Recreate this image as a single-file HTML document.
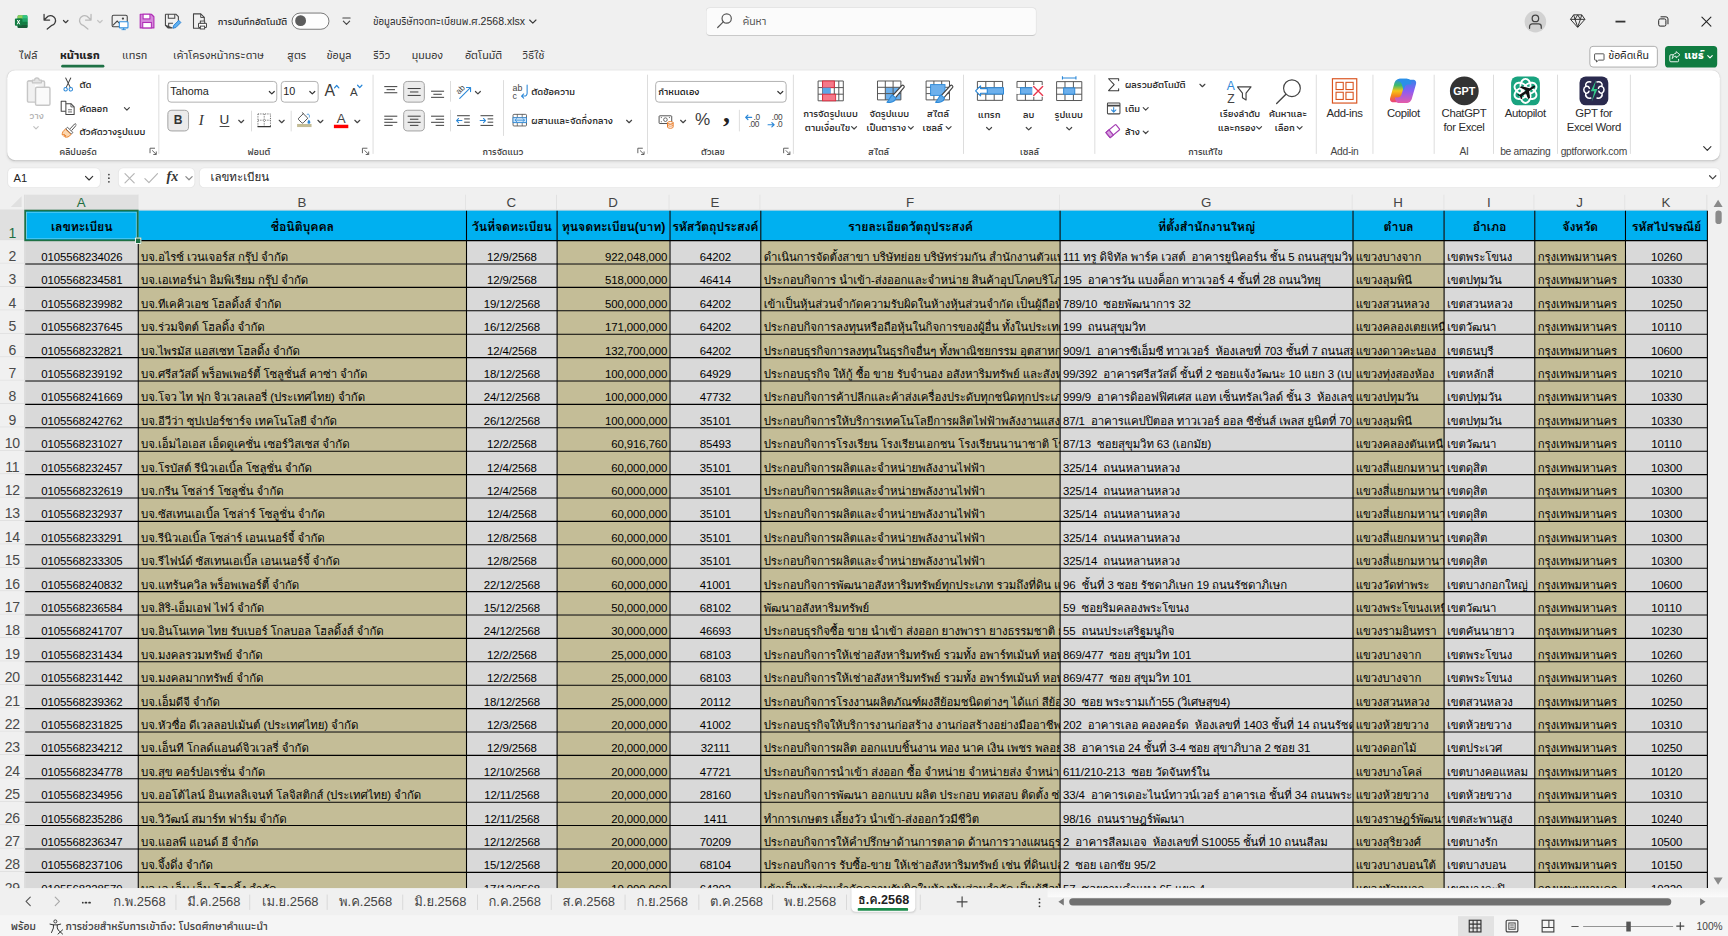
<!DOCTYPE html>
<html lang="th"><head><meta charset="utf-8"><title>Excel</title>
<style>
*{box-sizing:border-box;margin:0;padding:0}
html,body{width:1728px;height:936px;overflow:hidden;background:#f0f0f0}
body{font-family:"Liberation Sans","Loma","Noto Sans Thai Looped","Noto Sans Thai",sans-serif;color:#242424}
#clip{position:absolute;left:0;top:0;width:1728px;height:936px;overflow:hidden}
#app{position:absolute;left:0;top:0;width:1920px;height:1040px;transform:scale(0.9);transform-origin:0 0;background:#f0f0f0;overflow:hidden;font-size:13px}
#app div,#app span,#app i,#app b,#app svg{position:absolute}
#grid{overflow:hidden;background:#f0f0f0}
#grid .corner{background:#f0f0f0;border-right:1px solid #d4d4d4;border-bottom:1px solid #d4d4d4}
#grid .corner i{right:3px;bottom:3px;width:0;height:0;border-left:12px solid transparent;border-bottom:12px solid #e0e0e0}
#grid .ch{background:#f0f0f0;border-right:1px solid #dedede;border-bottom:1px solid #d4d4d4;text-align:center;font-size:14.8px;line-height:18.4px;color:#444;padding-top:0;overflow:hidden}
#grid .ch.sel{background:#e0e0e0;color:#1e6e42}
#grid .rh{background:#f0f0f0;border-right:1px solid #d4d4d4;border-bottom:1px solid #dedede;color:#4a4a4a;font-size:15.6px}
#grid .rh span{left:0.5px;right:0;bottom:-2.9px;text-align:center;line-height:20px;letter-spacing:-.3px}
#grid .rh.sel{background:#e0e0e0;color:#1e6e42}
#grid .c{overflow:hidden;white-space:nowrap;font-size:12.7px;color:#000;letter-spacing:-.12px}
#grid .c span{left:3.2px;right:3px;bottom:-1.8px;line-height:18px;white-space:pre;overflow:visible}
#grid .c.g{background:#d9d9d9}
#grid .c.k{background:#c4bd97}
#grid .c.c span{text-align:center}
#grid .c.r span{text-align:right}
#grid .c.l span{text-align:left}
#grid .c.hd{background:#00b0f0;font-weight:bold;font-size:13.7px}
#grid .c.hd span{text-align:center;top:1.5px;bottom:-1.5px;left:-20px;right:-20px;line-height:33.11px}
#grid .selbox{border:2px solid #1e7145;box-shadow:inset 0 0 0 1px rgba(255,255,255,.5)}
#grid .selh{width:7px;height:7px;background:#1e7145;border:1px solid #fff}
#grid .vsb{background:#f0f0f0}
#grid .vsb .thumb{left:7px;top:17.5px;width:7.5px;height:15.5px;border-radius:4px;background:#8a8a8a}
#grid .vsb .up{left:5px;top:6px;width:0;height:0;border-left:5.5px solid transparent;border-right:5.5px solid transparent;border-bottom:8px solid #8a8a8a}
#grid .vsb .dn{left:5px;bottom:4px;width:0;height:0;border-left:5.5px solid transparent;border-right:5.5px solid transparent;border-top:8px solid #8a8a8a}

#title,#tabs,#rib,#fbar,#status{font-family:"Liberation Sans","Athiti","Noto Sans Thai","Loma",sans-serif;font-weight:500}

#title{left:0;top:0;width:1920px;height:48px}
.t{white-space:nowrap;line-height:20px;height:20px}
.chev{width:8px;height:8px}
#tabs .t{font-size:13px;color:#333}
#tabs .t.act{font-weight:bold;color:#222}
#tabs .ul{height:3px;background:#1e7145;border-radius:2px}
.btn{border:1px solid #a6a6a6;border-radius:4px;background:#fff}
#rib .panel{background:#fff;border-radius:9px;box-shadow:0 1px 3px rgba(0,0,0,.10),0 0 1px rgba(0,0,0,.12)}
#rib .t{font-size:11.2px;color:#2b2b2b;font-weight:600}
#rib .t.c{text-align:center;transform:translateX(-50%)}
#rib .lbl{font-size:10.6px;color:#444}
#rib .sep{width:1px;background:#dadada}
#rib .box{border:1px solid #a9a9a9;border-radius:4px;background:#fff}
#rib .selb{border:1px solid #9a9a9a;border-radius:5px;background:#ebebeb}
#fbar .box{background:#fff;border-radius:5px;box-shadow:0 0 0 1px #e6e6e6}
#sheets{background:#f0f0f0}
#sheets .t{font-size:14.4px;color:#444;line-height:24px;height:24px}
#sheets .sp{width:1px;background:#d6d6d6}
#sheets .act{background:#fff;border-radius:0 0 5px 5px;box-shadow:0 1px 2px rgba(0,0,0,.12)}
#status{background:#f5f5f5}
#status .t{font-size:12.4px;color:#444;font-weight:600}
</style></head>
<body>
<div id="clip"><div id="app">
<div id="title">
<svg style="left:15.56px;top:15.56px;width:16.11111111111111px;height:16.11111111111111px" viewBox="0 0 32 32"><path d="M10 2h16a3 3 0 0 1 3 3v22a3 3 0 0 1-3 3H10a3 3 0 0 1-3-3V5a3 3 0 0 1 3-3z" fill="#21a366"/><path d="M7 9h11v7H7z" fill="#107c41"/><path d="M18 2h8a3 3 0 0 1 3 3v4H18z" fill="#33c481"/><path d="M18 9h11v7H18z" fill="#21a366"/><path d="M7 16h11v7H7z" fill="#185c37"/><path d="M18 16h11v7H18z" fill="#107c41"/><path d="M7 23h22v4a3 3 0 0 1-3 3H10a3 3 0 0 1-3-3z" fill="#185c37"/><path d="M7 2h11v7H7z" fill="#9bd86f" opacity=".0"/><path d="M10 2h8v7H7V5a3 3 0 0 1 3-3z" fill="#8fd05a"/><rect x="1" y="9" width="16" height="16" rx="2.2" fill="#107c41"/><path d="M5.2 12.3h2.5l1.4 3 1.5-3h2.3l-2.6 4.6 2.7 4.8h-2.5l-1.5-3.2-1.6 3.2H5l2.7-4.8z" fill="#fff"/></svg>
<svg style="left:45.0px;top:13.33px;width:21.12px;height:21.12px" viewBox="-12 -12 24 24" fill="none" ><path d="M-7.5 -8.5 V-1.5 H-0.5 M-7.2 -1.8 L-2.5 -6.3 A6.3 6.3 0 1 1 2.4 5.2 L-3.5 10" stroke="#3b3b3b" stroke-width="1.6" stroke-linecap="round" stroke-linejoin="round"/></svg>
<svg style="left:64.56px;top:16.44px;width:16px;height:16px" viewBox="-8 -8 16 16" fill="none" ><path d="M-2.5 -1.25 L0 1.25 L2.5 -1.25" stroke="#3b3b3b" stroke-width="1.3" stroke-linecap="round" stroke-linejoin="round"/></svg>
<svg style="left:84.44px;top:13.33px;width:21.12px;height:21.12px" viewBox="-12 -12 24 24" fill="none" ><path d="M7.5 -8.5 V-1.5 H0.5 M7.2 -1.8 L2.5 -6.3 A6.3 6.3 0 1 0 -2.4 5.2 L3.5 10" stroke="#b9b9b9" stroke-width="1.6" stroke-linecap="round" stroke-linejoin="round"/></svg>
<svg style="left:103.44px;top:16.44px;width:16px;height:16px" viewBox="-8 -8 16 16" fill="none" ><path d="M-2.5 -1.25 L0 1.25 L2.5 -1.25" stroke="#c4c4c4" stroke-width="1.3" stroke-linecap="round" stroke-linejoin="round"/></svg>
<svg style="left:122.93px;top:13.49px;width:20.8px;height:20.8px" viewBox="-13 -13 26 26" fill="none" ><rect x="-11" y="-8" width="21" height="16" rx="2" stroke="#444" stroke-width="1.5"/><path d="M-10 6 L-4 0 L0 4" stroke="#444" stroke-width="1.4"/><circle cx="4" cy="-3.5" r="1.6" fill="#444"/><rect x="-1" y="1" width="12" height="8.5" rx="1" fill="#fff" stroke="#2e8fe0" stroke-width="1.5"/><path d="M2 12 H8 M5 9.5 V12" stroke="#2e8fe0" stroke-width="1.5"/></svg>
<svg style="left:152.6px;top:13.49px;width:20.8px;height:20.8px" viewBox="-13 -13 26 26" fill="none" ><path d="M-9.5 -9.5 H6 L9.5 -6 V9.5 H-9.5 Z" fill="#d58adb" stroke="#b02fb6" stroke-width="1.6" stroke-linejoin="round"/><rect x="-5.5" y="-9.5" width="9.5" height="6.5" fill="#fff" stroke="#b02fb6" stroke-width="1.5"/><rect x="-6" y="2" width="12" height="7.5" fill="#fff" stroke="#b02fb6" stroke-width="1.5"/></svg>
<svg style="left:181.49px;top:13.49px;width:20.8px;height:20.8px" viewBox="-13 -13 26 26" fill="none" ><path d="M-9.5 -9.5 H5 L8.5 -6 V0 M0 9.5 H-6 L-9.5 6 Z M-9.5 6 V-9.5" stroke="#444" stroke-width="1.5" stroke-linejoin="round"/><path d="M-5.5 -9.5 V-4 H3.5 V-9.5" stroke="#444" stroke-width="1.4"/><path d="M-5 9 V3 H1" stroke="#444" stroke-width="1.4"/><path d="M1 10 L2 6 L9 -1 L12 2 L5 9 Z" fill="#5fb0f0" stroke="#1f78d0" stroke-width="1.2" stroke-linejoin="round"/></svg>
<svg style="left:211.27px;top:13.49px;width:20.8px;height:20.8px" viewBox="-13 -13 26 26" fill="none" ><path d="M2 10 H-8 V-10 H2 L7 -5 V0" stroke="#444" stroke-width="1.5" stroke-linejoin="round"/><path d="M2 -10 V-5 H7" stroke="#444" stroke-width="1.3"/><rect x="-1" y="3" width="11" height="6" rx="1" fill="#fff" stroke="#444" stroke-width="1.4"/><rect x="1.5" y="0" width="6" height="3" stroke="#444" stroke-width="1.3" fill="#fff"/><rect x="1.5" y="7" width="6" height="4" stroke="#444" stroke-width="1.3" fill="#fff"/></svg>
<span class="t" style="left:241.89px;top:13.670000000000002px;font-size:10.9px;color:#333;font-weight:600">การบันทึกอัตโนมัติ</span>
<div style="left:324.11px;top:13.78px;width:41.78px;height:18.89px;border:1px solid #6b6b6b;border-radius:9.44px;background:#fdfdfd"></div>
<div style="left:328.33px;top:17.44px;width:11.56px;height:11.56px;border-radius:50%;background:#5c5c5c"></div>
<svg style="left:377.22px;top:16.11px;width:16px;height:16px" viewBox="-8 -8 16 16" fill="none" ><path d="M-4 -4 H4" stroke="#444" stroke-width="1.3" stroke-linecap="round"/><path d="M-3.5 -0.5 L0 3 L3.5 -0.5" stroke="#444" stroke-width="1.3" stroke-linecap="round" stroke-linejoin="round"/></svg>
<span class="t" style="left:414.78px;top:13.670000000000002px;font-size:11.7px;color:#2b2b2b">ข้อมูลบริษัทจดทะเบียนพ.ศ.2568.xlsx</span>
<svg style="left:583.89px;top:16.22px;width:16px;height:16px" viewBox="-8 -8 16 16" fill="none" ><path d="M-3.5 -1.75 L0 1.75 L3.5 -1.75" stroke="#3b3b3b" stroke-width="1.3" stroke-linecap="round" stroke-linejoin="round"/></svg>
<div style="left:784.44px;top:8.11px;width:367.44px;height:31.56px;background:#fbfbfb;border:1px solid #dcdcdc;border-bottom-color:#c9c9c9;border-radius:5px"></div>
<svg style="left:791.0px;top:9.33px;width:28px;height:28px" viewBox="-14 -14 28 28" fill="none" ><circle cx="2.411111111111111" cy="-2.411111111111111" r="5.166666666666667" stroke="#555" stroke-width="1.3"/><path d="M-1.377777777777778 1.377777777777778 L-7.577777777777778 7.577777777777778" stroke="#555" stroke-width="1.3" stroke-linecap="round"/></svg>
<span class="t" style="left:825.22px;top:13.89px;font-size:12.6px;color:#555">ค้นหา</span>
<div style="left:1693.67px;top:11.67px;width:24.44px;height:24.44px;border-radius:50%;background:#d2d2d2"></div>
<svg style="left:1693.89px;top:11.89px;width:24px;height:24px" viewBox="-12 -12 24 24" fill="none" ><circle cx="0" cy="-3.5" r="3.6" stroke="#444" stroke-width="1.4"/><path d="M-6.5 7.5 V5.5 A3 3 0 0 1 -3.5 2.5 H3.5 A3 3 0 0 1 6.5 5.5 V7.5" stroke="#444" stroke-width="1.4" stroke-linecap="round"/></svg>
<svg style="left:1741.0px;top:11.33px;width:24px;height:24px" viewBox="-12 -12 24 24" fill="none" ><path d="M-4.5 -6.5 H4.5 L8 -1.5 L0 7.5 L-8 -1.5 Z M-8 -1.5 H8 M-3 -1.5 L0 7 L3 -1.5 M-4.5 -6.5 L-3 -1.5 L0 -6.5 L3 -1.5 L4.5 -6.5" stroke="#333" stroke-width="1.1" stroke-linejoin="round"/></svg>
<div style="left:1795.0px;top:23.33px;width:10.56px;height:1.2px;background:#333"></div>
<svg style="left:1837.78px;top:14.11px;width:20px;height:20px" viewBox="-10 -10 20 20" fill="none" ><rect x="-5" y="-3" width="8" height="8" rx="1.6" stroke="#222" stroke-width="1.1"/><path d="M-2.5 -5.3 H3 A2.3 2.3 0 0 1 5.3 -3 V2.5" stroke="#222" stroke-width="1.1" stroke-linecap="round"/></svg>
<svg style="left:1885.89px;top:14.11px;width:20px;height:20px" viewBox="-10 -10 20 20" fill="none" ><path d="M-5 -5 L5 5 M5 -5 L-5 5" stroke="#222" stroke-width="1.2" stroke-linecap="round"/></svg>
</div>
<div id="tabs" style="left:0;top:0;width:1920px;height:78px">
<span class="t" style="left:21.11px;top:52.22px;">ไฟล์</span>
<span class="t act" style="left:66.67px;top:52.22px;">หน้าแรก</span>
<span class="t" style="left:135.89px;top:52.22px;">แทรก</span>
<span class="t" style="left:192.56px;top:52.22px;">เค้าโครงหน้ากระดาษ</span>
<span class="t" style="left:319.22px;top:52.22px;">สูตร</span>
<span class="t" style="left:363.0px;top:52.22px;">ข้อมูล</span>
<span class="t" style="left:414.78px;top:52.22px;">รีวิว</span>
<span class="t" style="left:457.44px;top:52.22px;">มุมมอง</span>
<span class="t" style="left:516.67px;top:52.22px;">อัตโนมัติ</span>
<span class="t" style="left:580.33px;top:52.22px;">วิธีใช้</span>
<div class="ul" style="left:67.56px;top:72.33px;width:48.0px"></div>
<div class="btn" style="left:1765.89px;top:51.11px;width:76.0px;height:24.11px"></div>
<svg style="left:1769.89px;top:56.56px;width:14.0px;height:14.0px" viewBox="-10 -10 20 20" fill="none" ><path d="M-6.5 -6 H6.5 A1 1 0 0 1 7.5 -5 V3 A1 1 0 0 1 6.5 4 H-1 L-4.5 7 V4 H-6.5 A1 1 0 0 1 -7.5 3 V-5 A1 1 0 0 1 -6.5 -6 Z" stroke="#333" stroke-width="1.3" stroke-linejoin="round"/></svg>
<span class="t" style="left:1787.22px;top:52.22px;font-size:12.6px;color:#222">ข้อคิดเห็น</span>
<div style="left:1850.33px;top:51.11px;width:57.44px;height:24.11px;background:#107c41;border-radius:4px"></div>
<svg style="left:1852.76px;top:55.31px;width:15.6px;height:15.6px" viewBox="-10 -10 20 20" fill="none" ><path d="M-2 -2.5 H-5.5 A1.5 1.5 0 0 0 -7 -1 V6 A1.5 1.5 0 0 0 -5.5 7.5 H4 A1.5 1.5 0 0 0 5.5 6 V4" stroke="#fff" stroke-width="1.3" stroke-linecap="round"/><path d="M2 -7 L7.5 -2.5 L2 2 V-0.5 C-1 -0.5 -2.5 1 -3.5 3 C-3.5 -1.5 -1 -4.5 2 -4.7 Z" stroke="#fff" stroke-width="1.2" stroke-linejoin="round"/></svg>
<span class="t" style="left:1871.44px;top:52.22px;font-size:12.6px;color:#fff;font-weight:bold">แชร์</span>
<svg style="left:1892.33px;top:55.11px;width:16px;height:16px" viewBox="-8 -8 16 16" fill="none" ><path d="M-2.5 -1.25 L0 1.25 L2.5 -1.25" stroke="#fff" stroke-width="1.3" stroke-linecap="round" stroke-linejoin="round"/></svg>
</div>
<div id="rib" style="left:0;top:0;width:1920px;height:190px">
<div class="panel" style="left:8.44px;top:78.44px;width:1902.89px;height:99.56px"></div>
<svg style="left:24.56px;top:83.67px;width:36px;height:36px" viewBox="-18 -18 36 36" fill="none" ><path d="M-4 -12 H-11 A1.5 1.5 0 0 0 -12.5 -10.5 V10 A1.5 1.5 0 0 0 -11 11.5 H-4" stroke="#c6c6c6" stroke-width="1.6" fill="#f1f1f1"/><path d="M-12.5 -10.5 A1.5 1.5 0 0 1 -11 -12 H5 A1.5 1.5 0 0 1 6.5 -10.5 V-5" stroke="#c6c6c6" stroke-width="1.6" fill="#f1f1f1"/><path d="M-7 -10 V-13 H-4.5 A2.5 2.5 0 0 1 0.5 -13 H3 V-10 Z" fill="#e4e4e4" stroke="#c6c6c6" stroke-width="1.4" stroke-linejoin="round"/><rect x="-3.5" y="-5" width="16" height="20" rx="1.5" fill="#fafafa" stroke="#c6c6c6" stroke-width="1.6"/></svg>
<span class="t" style="left:32.56px;top:117.56px;color:#b5b5b5">วาง</span>
<svg style="left:32.33px;top:134.0px;width:16px;height:16px" viewBox="-8 -8 16 16" fill="none" ><path d="M-2.5 -1.25 L0 1.25 L2.5 -1.25" stroke="#c2c2c2" stroke-width="1.3" stroke-linecap="round" stroke-linejoin="round"/></svg>
<svg style="left:66.76px;top:85.09px;width:17.6px;height:17.6px" viewBox="-11 -11 22 22" fill="none" ><path d="M-3.5 -9 L3 4.5 M3.5 -9 L-3 4.5" stroke="#444" stroke-width="1.4" stroke-linecap="round"/><circle cx="-3.6" cy="6.8" r="2.4" stroke="#2b88d8" stroke-width="1.4"/><circle cx="3.6" cy="6.8" r="2.4" stroke="#2b88d8" stroke-width="1.4"/></svg>
<span class="t" style="left:88.33px;top:84.0px;">ตัด</span>
<svg style="left:65.51px;top:110.4px;width:19.2px;height:19.2px" viewBox="-12 -12 24 24" fill="none" ><path d="M-3 -5.5 V-9 H-9.5 V5 H-3" stroke="#444" stroke-width="1.4" stroke-linejoin="round"/><path d="M-3 -5.5 H4 L8.5 -1 V9.5 H-3 Z" stroke="#444" stroke-width="1.4" fill="#fff" stroke-linejoin="round"/><path d="M4 -5.5 V-1 H8.5 M0 3 H5.5 M0 6 H5.5" stroke="#444" stroke-width="1.1"/></svg>
<span class="t" style="left:88.33px;top:109.78px;">คัดลอก</span>
<svg style="left:133.11px;top:112.56px;width:16px;height:16px" viewBox="-8 -8 16 16" fill="none" ><path d="M-2.75 -1.375 L0 1.375 L2.75 -1.375" stroke="#444" stroke-width="1.3" stroke-linecap="round" stroke-linejoin="round"/></svg>
<svg style="left:66.53px;top:136.2px;width:18.72px;height:18.72px" viewBox="-13 -13 26 26" fill="none" ><path d="M2 -3 L9 -10.5 A1.6 1.6 0 0 1 11.3 -8.3 L4.5 -0.5" stroke="#444" stroke-width="1.4" fill="#fff" stroke-linejoin="round"/><path d="M-2 -5.5 L6.5 2.5 L4 5 L-4.5 -3 Z" fill="#fff" stroke="#444" stroke-width="1.3" stroke-linejoin="round"/><path d="M-5 -2.5 L3.5 5.5 C1 9.5 -3 10.5 -6 9.5 L-4.5 7 L-7.5 8.5 L-6.5 5.5 L-10 6.5 C-10.5 3 -8.5 -0.5 -5 -2.5 Z" fill="#fbd7b0" stroke="#e8761a" stroke-width="1.3" stroke-linejoin="round"/></svg>
<span class="t" style="left:88.33px;top:135.56px;">ตัวคัดวางรูปแบบ</span>
<span class="t lbl" style="left:66.11px;top:157.56px;">คลิปบอร์ด</span>
<svg style="left:164.9px;top:163.23px;width:10.2px;height:10.2px" viewBox="-6 -6 12 12" fill="none" ><path d="M-4 2.5 V-4 H2.5" stroke="#555" stroke-width="1.2"/><path d="M-1.2 -1.2 L4 4 M4.2 0.3 V4.2 H0.3" stroke="#555" stroke-width="1.2"/></svg>
<div class="sep" style="left:176.44px;top:83.33px;height:87.78px"></div>
<div class="box" style="left:186.11px;top:90.0px;width:122.22px;height:23.89px"></div>
<span class="t" style="left:189.22px;top:91.67px;font-weight:400;font-size:12px;color:#222">Tahoma</span>
<svg style="left:294.22px;top:94.56px;width:16px;height:16px" viewBox="-8 -8 16 16" fill="none" ><path d="M-2.75 -1.375 L0 1.375 L2.75 -1.375" stroke="#333" stroke-width="1.3" stroke-linecap="round" stroke-linejoin="round"/></svg>
<div class="box" style="left:311.67px;top:90.0px;width:42.56px;height:23.89px"></div>
<span class="t" style="left:314.67px;top:91.67px;font-weight:400;font-size:12px;color:#222">10</span>
<svg style="left:339.0px;top:94.56px;width:16px;height:16px" viewBox="-8 -8 16 16" fill="none" ><path d="M-2.75 -1.375 L0 1.375 L2.75 -1.375" stroke="#333" stroke-width="1.3" stroke-linecap="round" stroke-linejoin="round"/></svg>
<svg style="left:355.89px;top:88.11px;width:26px;height:26px" viewBox="-13 -13 26 26" fill="none" ><text x="-2.5" y="5.7" text-anchor="middle" font-family="Liberation Sans,sans-serif" font-size="17.5" fill="#3b3b3b">A</text><path d="M2.7 -3.4 L5.1 -6 L7.5 -3.4" stroke="#2b88d8" stroke-width="1.4" stroke-linecap="round" stroke-linejoin="round"/></svg>
<svg style="left:382.0px;top:88.44px;width:26px;height:26px" viewBox="-13 -13 26 26" fill="none" ><text x="-1.9" y="5.3" text-anchor="middle" font-family="Liberation Sans,sans-serif" font-size="12.8" fill="#3b3b3b">A</text><path d="M2.3 -6.3 L4.7 -3.7 L7.1 -6.3" stroke="#2b88d8" stroke-width="1.4" stroke-linecap="round" stroke-linejoin="round"/></svg>
<div class="selb" style="left:186.11px;top:122.22px;width:23.89px;height:23.67px"></div>
<span class="t c" style="left:198.0px;top:123.66999999999999px;font-weight:bold;font-size:13.4px;color:#333">B</span>
<span class="t c" style="left:223.67px;top:123.66999999999999px;font-weight:400;font:italic 16.5px 'Liberation Serif',serif;color:#333;line-height:20px">I</span>
<span class="t c" style="left:249.44px;top:123.11000000000001px;font-weight:400;font-size:15px;color:#333;text-decoration:underline;text-underline-offset:2px">U</span>
<svg style="left:260.11px;top:126.78px;width:16px;height:16px" viewBox="-8 -8 16 16" fill="none" ><path d="M-2.75 -1.375 L0 1.375 L2.75 -1.375" stroke="#444" stroke-width="1.3" stroke-linecap="round" stroke-linejoin="round"/></svg>
<div class="sep" style="left:278.67px;top:123.33px;height:22.22px"></div>
<svg style="left:284.1px;top:124.1px;width:19.14px;height:19.14px" viewBox="-11 -11 22 22" fill="none" ><path d="M-8 -8 H8 V8 M-8 -8 V8 M0 -8 V8 M-8 0 H8" stroke="#555" stroke-width="1.1" stroke-dasharray="1.5 1.5"/><path d="M-8.5 8.3 H8.5" stroke="#333" stroke-width="1.7"/></svg>
<svg style="left:304.56px;top:126.78px;width:16px;height:16px" viewBox="-8 -8 16 16" fill="none" ><path d="M-2.75 -1.375 L0 1.375 L2.75 -1.375" stroke="#444" stroke-width="1.3" stroke-linecap="round" stroke-linejoin="round"/></svg>
<div class="sep" style="left:323.11px;top:123.33px;height:22.22px"></div>
<svg style="left:327.97px;top:122.42px;width:20.28px;height:20.28px" viewBox="-13 -13 26 26" fill="none" ><path d="M-3 -9 L5 -1 L-1.5 5.5 A1.5 1.5 0 0 1 -3.6 5.5 L-8 1.2 A1.5 1.5 0 0 1 -8 -1 L-1.5 -7.5" stroke="#444" stroke-width="1.3" stroke-linejoin="round" stroke-linecap="round"/><path d="M6.5 1 C8 3 8.6 4 8.6 5 A2 2 0 0 1 4.5 5 C4.5 4 5.2 3 6.5 1 Z" fill="#2b88d8"/><path d="M3.5 -6 C6 -8 8 -6 7 -2" stroke="#2b88d8" stroke-width="1.2" fill="none"/><rect x="-10.3" y="7.2" width="20.6" height="4.4" fill="#c4bd97"/></svg>
<svg style="left:348.44px;top:126.78px;width:16px;height:16px" viewBox="-8 -8 16 16" fill="none" ><path d="M-2.75 -1.375 L0 1.375 L2.75 -1.375" stroke="#444" stroke-width="1.3" stroke-linecap="round" stroke-linejoin="round"/></svg>
<svg style="left:366.11px;top:119.56px;width:26px;height:26px" viewBox="-13 -13 26 26" fill="none" ><text x="0" y="4.1" text-anchor="middle" font-family="Liberation Sans,sans-serif" font-size="14.8" fill="#444">A</text><rect x="-8" y="5.6" width="16" height="3.8" fill="#ff0000"/></svg>
<svg style="left:389.44px;top:126.78px;width:16px;height:16px" viewBox="-8 -8 16 16" fill="none" ><path d="M-2.75 -1.375 L0 1.375 L2.75 -1.375" stroke="#444" stroke-width="1.3" stroke-linecap="round" stroke-linejoin="round"/></svg>
<span class="t lbl" style="left:275.0px;top:157.56px;">ฟอนต์</span>
<svg style="left:400.79px;top:163.23px;width:10.2px;height:10.2px" viewBox="-6 -6 12 12" fill="none" ><path d="M-4 2.5 V-4 H2.5" stroke="#555" stroke-width="1.2"/><path d="M-1.2 -1.2 L4 4 M4.2 0.3 V4.2 H0.3" stroke="#555" stroke-width="1.2"/></svg>
<div class="sep" style="left:413.56px;top:83.33px;height:87.78px"></div>
<svg style="left:424.24px;top:91.69px;width:20.4px;height:20.4px" viewBox="-12 -12 24 24" fill="none" ><path d="M-8 -7 H8 M-5 -3 H5 M-8 1 H8" stroke="#3b3b3b" stroke-width="1.3" stroke-linecap="round"/></svg>
<div class="selb" style="left:448.0px;top:90.0px;width:23.89px;height:23.89px"></div>
<svg style="left:449.8px;top:91.69px;width:20.4px;height:20.4px" viewBox="-12 -12 24 24" fill="none" ><path d="M-8 -4.5 H8 M-5 0 H5 M-8 4.5 H8" stroke="#3b3b3b" stroke-width="1.3" stroke-linecap="round"/></svg>
<svg style="left:475.91px;top:91.69px;width:20.4px;height:20.4px" viewBox="-12 -12 24 24" fill="none" ><path d="M-8 -1 H8 M-5 3 H5 M-8 7 H8" stroke="#3b3b3b" stroke-width="1.3" stroke-linecap="round"/></svg>
<div class="sep" style="left:500.0px;top:90.0px;height:23.33px"></div>
<svg style="left:504.77px;top:90.88px;width:21.58px;height:21.58px" viewBox="-13 -13 26 26" fill="none" ><text x="-9" y="1" font-family="Liberation Sans,sans-serif" font-size="11" fill="#444" transform="rotate(-45 -4 0)">ab</text><path d="M-6 9 L8 -5 M3 -5.5 H8.5 V0" stroke="#2b88d8" stroke-width="1.5" stroke-linecap="round" stroke-linejoin="round"/></svg>
<svg style="left:523.44px;top:94.56px;width:16px;height:16px" viewBox="-8 -8 16 16" fill="none" ><path d="M-2.75 -1.375 L0 1.375 L2.75 -1.375" stroke="#444" stroke-width="1.3" stroke-linecap="round" stroke-linejoin="round"/></svg>
<svg style="left:424.24px;top:123.8px;width:20.4px;height:20.4px" viewBox="-12 -12 24 24" fill="none" ><path d="M-8 -6 H8 M-8 -2 H2 M-8 2 H8 M-8 6 H2" stroke="#3b3b3b" stroke-width="1.3" stroke-linecap="round"/></svg>
<div class="selb" style="left:448.0px;top:122.22px;width:23.89px;height:23.67px"></div>
<svg style="left:449.8px;top:123.8px;width:20.4px;height:20.4px" viewBox="-12 -12 24 24" fill="none" ><path d="M-8 -6 H8 M-5 -2 H5 M-8 2 H8 M-5 6 H5" stroke="#3b3b3b" stroke-width="1.3" stroke-linecap="round"/></svg>
<svg style="left:475.91px;top:123.8px;width:20.4px;height:20.4px" viewBox="-12 -12 24 24" fill="none" ><path d="M-8 -6 H8 M-2 -2 H8 M-8 2 H8 M-2 6 H8" stroke="#3b3b3b" stroke-width="1.3" stroke-linecap="round"/></svg>
<div class="sep" style="left:500.0px;top:122.22px;height:23.33px"></div>
<svg style="left:504.82px;top:124.04px;width:19.92px;height:19.92px" viewBox="-12 -12 24 24" fill="none" ><path d="M-8 -6.5 H8 M1.5 -2.2 H8 M1.5 2.2 H8 M-8 6.5 H8" stroke="#3b3b3b" stroke-width="1.3" stroke-linecap="round"/><path d="M-9 0 H-2 M-6.5 -2.8 L-9.2 0 L-6.5 2.8" stroke="#2b88d8" stroke-width="1.4" stroke-linecap="round" stroke-linejoin="round"/></svg>
<svg style="left:531.15px;top:124.04px;width:19.92px;height:19.92px" viewBox="-12 -12 24 24" fill="none" ><path d="M-8 -6.5 H8 M1.5 -2.2 H8 M1.5 2.2 H8 M-8 6.5 H8" stroke="#3b3b3b" stroke-width="1.3" stroke-linecap="round"/><path d="M-9 0 H-2 M-4.5 -2.8 L-1.8 0 L-4.5 2.8" stroke="#2b88d8" stroke-width="1.4" stroke-linecap="round" stroke-linejoin="round"/></svg>
<div class="sep" style="left:559.22px;top:89.44px;height:61.11px"></div>
<svg style="left:567.28px;top:90.62px;width:22.1px;height:22.1px" viewBox="-13 -13 26 26" fill="none" ><text x="-10" y="-1" font-family="Liberation Sans,sans-serif" font-size="11.5" fill="#444">ab</text><text x="-10" y="9.5" font-family="Liberation Sans,sans-serif" font-size="11.5" fill="#444">c</text><path d="M5 -9 V2 A3.5 3.5 0 0 1 1.5 5.5 H-2 M0.5 2.8 L-2.3 5.5 L0.5 8.2" stroke="#2b88d8" stroke-width="1.4" stroke-linecap="round" stroke-linejoin="round" transform="translate(4 0)"/></svg>
<span class="t" style="left:590.33px;top:92.0px;">ตัดข้อความ</span>
<svg style="left:568.26px;top:124.15px;width:19.04px;height:19.04px" viewBox="-14 -14 28 28" fill="none" ><rect x="-11" y="-9.5" width="22" height="19" rx="1.5" stroke="#444" stroke-width="1.3"/><path d="M-11 -4 H11 M-11 4 H11 M-4 -9.5 V-4 M4 -9.5 V-4 M-4 4 V9.5 M4 4 V9.5" stroke="#444" stroke-width="1.1"/><rect x="-11" y="-4" width="22" height="8" fill="#cfe6fa" stroke="#2b88d8" stroke-width="1.3"/><path d="M-7.5 0 H7.5 M-5 -2.5 L-7.8 0 L-5 2.5 M5 -2.5 L7.8 0 L5 2.5" stroke="#2b88d8" stroke-width="1.3" stroke-linecap="round" stroke-linejoin="round"/></svg>
<span class="t" style="left:590.33px;top:123.88999999999999px;">ผสานและจัดกึ่งกลาง</span>
<svg style="left:691.44px;top:126.78px;width:16px;height:16px" viewBox="-8 -8 16 16" fill="none" ><path d="M-2.75 -1.375 L0 1.375 L2.75 -1.375" stroke="#444" stroke-width="1.3" stroke-linecap="round" stroke-linejoin="round"/></svg>
<span class="t lbl" style="left:536.11px;top:157.56px;">การจัดแนว</span>
<svg style="left:706.9px;top:163.23px;width:10.2px;height:10.2px" viewBox="-6 -6 12 12" fill="none" ><path d="M-4 2.5 V-4 H2.5" stroke="#555" stroke-width="1.2"/><path d="M-1.2 -1.2 L4 4 M4.2 0.3 V4.2 H0.3" stroke="#555" stroke-width="1.2"/></svg>
<div class="sep" style="left:719.11px;top:83.33px;height:87.78px"></div>
<div class="box" style="left:728.33px;top:90.0px;width:145.22px;height:23.89px"></div>
<span class="t" style="left:731.44px;top:92.0px;color:#222">กำหนดเอง</span>
<svg style="left:859.0px;top:94.56px;width:16px;height:16px" viewBox="-8 -8 16 16" fill="none" ><path d="M-2.75 -1.375 L0 1.375 L2.75 -1.375" stroke="#333" stroke-width="1.3" stroke-linecap="round" stroke-linejoin="round"/></svg>
<svg style="left:730.42px;top:124.08px;width:20.28px;height:20.28px" viewBox="-13 -13 26 26" fill="none" ><rect x="-10" y="-7" width="18" height="11" rx="1" stroke="#444" stroke-width="1.3"/><circle cx="-1" cy="-1.5" r="2.6" stroke="#444" stroke-width="1.1"/><path d="M-7.5 -4.5 H-6 M4 -4.5 H5.5 M-7.5 1.5 H-6" stroke="#444" stroke-width="1.1"/><path d="M2 3 A4 1.8 0 0 0 10 3 V9 A4 1.8 0 0 1 2 9 Z" fill="#fff" stroke="#e8731a" stroke-width="1.3"/><ellipse cx="6" cy="3" rx="4" ry="1.8" fill="#fff" stroke="#e8731a" stroke-width="1.3"/><path d="M2 6 A4 1.8 0 0 0 10 6" stroke="#e8731a" stroke-width="1.1"/></svg>
<svg style="left:750.56px;top:126.78px;width:16px;height:16px" viewBox="-8 -8 16 16" fill="none" ><path d="M-2.75 -1.375 L0 1.375 L2.75 -1.375" stroke="#444" stroke-width="1.3" stroke-linecap="round" stroke-linejoin="round"/></svg>
<span class="t c" style="left:780.56px;top:123.33000000000001px;font-weight:400;font-size:19px;color:#3b3b3b">%</span>
<span class="t c" style="left:807.22px;top:115.11px;font-weight:400;font:bold 31px 'Liberation Serif',serif;color:#222;line-height:20px">,</span>
<div class="sep" style="left:821.11px;top:122.22px;height:23.33px"></div>
<svg style="left:825.89px;top:123.89px;width:20px;height:20px" viewBox="-10 -10 20 20" fill="none" ><text x="1.2" y="-0.8" font-family="Liberation Sans,sans-serif" font-size="9.2" fill="#444" letter-spacing="-0.4">.0</text><text x="-4.2" y="7.6" font-family="Liberation Sans,sans-serif" font-size="9.2" fill="#444" letter-spacing="-0.4">.00</text><path d="M-7.3 -3.6 H-0.8 M-5 -6 L-7.5 -3.6 L-5 -1.2" stroke="#2b88d8" stroke-width="1.3" stroke-linecap="round" stroke-linejoin="round"/></svg>
<svg style="left:851.44px;top:123.89px;width:20px;height:20px" viewBox="-10 -10 20 20" fill="none" ><text x="-3.4" y="-0.8" font-family="Liberation Sans,sans-serif" font-size="9.2" fill="#444" letter-spacing="-0.4">.00</text><text x="1.4" y="7.6" font-family="Liberation Sans,sans-serif" font-size="9.2" fill="#444" letter-spacing="-0.4">.0</text><path d="M-7.6 4.6 H-1.2 M-3.4 2.2 L-0.9 4.6 L-3.4 7" stroke="#2b88d8" stroke-width="1.3" stroke-linecap="round" stroke-linejoin="round"/></svg>
<span class="t lbl" style="left:778.89px;top:157.56px;">ตัวเลข</span>
<svg style="left:868.57px;top:163.23px;width:10.2px;height:10.2px" viewBox="-6 -6 12 12" fill="none" ><path d="M-4 2.5 V-4 H2.5" stroke="#555" stroke-width="1.2"/><path d="M-1.2 -1.2 L4 4 M4.2 0.3 V4.2 H0.3" stroke="#555" stroke-width="1.2"/></svg>
<div class="sep" style="left:881.44px;top:83.33px;height:87.78px"></div>
<svg style="left:905.89px;top:83.89px;width:34px;height:34px" viewBox="-17 -17 34 34" fill="none" ><path d="M-14 -11 V11 M-9 -11 V11 M-1 -11 V11 M4 -11 V11 M9 -11 V11 M14 -11 V11 M-14 -11.0 H14 M-14 -3.666666666666667 H14 M-14 3.666666666666666 H14 M-14 11.0 H14" stroke="#555" stroke-width="1.1"/><rect x="-9" y="-11" width="13" height="7.333333333333333" fill="#f4798a" stroke="#e02a3c" stroke-width="1"/><rect x="-9" y="-3.666666666666667" width="9" height="7.333333333333333" fill="#5aa7e8"/><rect x="-9" y="3.666666666666666" width="14.5" height="7.333333333333333" fill="#f4798a" stroke="#e02a3c" stroke-width="1"/></svg>
<span class="t c" style="left:922.78px;top:116.33px;">การจัดรูปแบบ</span>
<span class="t c" style="left:919.44px;top:131.11px;">ตามเงื่อนไข</span>
<svg style="left:941.44px;top:133.89px;width:16px;height:16px" viewBox="-8 -8 16 16" fill="none" ><path d="M-2.75 -1.375 L0 1.375 L2.75 -1.375" stroke="#444" stroke-width="1.3" stroke-linecap="round" stroke-linejoin="round"/></svg>
<svg style="left:971.44px;top:83.11px;width:36px;height:36px" viewBox="-18 -18 36 36" fill="none" ><rect x="-5.333333333333334" y="-4.0" width="17.333333333333332" height="14.0" fill="#6db0ec"/><path d="M-14.0 -11 V10 M-5.333333333333334 -11 V10 M3.333333333333332 -11 V10 M12.0 -11 V10 M-14 -11.0 H12 M-14 -4.0 H12 M-14 3.0 H12 M-14 10.0 H12" stroke="#555" stroke-width="1.1"/><g transform="translate(1 1)"><path d="M2 4 L12 -7 A1.7 1.7 0 0 1 14.5 -4.8 L5 6.5" fill="#fff" stroke="#444" stroke-width="1.3" stroke-linejoin="round"/><path d="M1.5 3.5 L5.5 7 C4.5 11 0 12.5 -4.5 11.5 C-2 10 -1.5 6 1.5 3.5 Z" fill="#5aa7e8" stroke="#2b88d8" stroke-width="1.2" stroke-linejoin="round"/></g></svg>
<span class="t c" style="left:988.11px;top:116.33px;">จัดรูปแบบ</span>
<span class="t c" style="left:984.78px;top:131.11px;">เป็นตาราง</span>
<svg style="left:1003.67px;top:133.89px;width:16px;height:16px" viewBox="-8 -8 16 16" fill="none" ><path d="M-2.75 -1.375 L0 1.375 L2.75 -1.375" stroke="#444" stroke-width="1.3" stroke-linecap="round" stroke-linejoin="round"/></svg>
<svg style="left:1024.56px;top:83.11px;width:36px;height:36px" viewBox="-18 -18 36 36" fill="none" ><path d="M-14.0 -11 V10 M-5.333333333333334 -11 V10 M3.333333333333332 -11 V10 M12.0 -11 V10 M-14 -11.0 H12 M-14 -4.0 H12 M-14 3.0 H12 M-14 10.0 H12" stroke="#555" stroke-width="1.1"/><rect x="-9" y="-7" width="16" height="12" fill="#6db0ec" stroke="#2b88d8" stroke-width="1"/><g transform="translate(1 1)"><path d="M2 4 L12 -7 A1.7 1.7 0 0 1 14.5 -4.8 L5 6.5" fill="#fff" stroke="#444" stroke-width="1.3" stroke-linejoin="round"/><path d="M1.5 3.5 L5.5 7 C4.5 11 0 12.5 -4.5 11.5 C-2 10 -1.5 6 1.5 3.5 Z" fill="#5aa7e8" stroke="#2b88d8" stroke-width="1.2" stroke-linejoin="round"/></g></svg>
<span class="t c" style="left:1042.22px;top:116.33px;">สไตล์</span>
<span class="t c" style="left:1036.11px;top:131.11px;">เซลล์</span>
<svg style="left:1045.89px;top:133.89px;width:16px;height:16px" viewBox="-8 -8 16 16" fill="none" ><path d="M-2.75 -1.375 L0 1.375 L2.75 -1.375" stroke="#444" stroke-width="1.3" stroke-linecap="round" stroke-linejoin="round"/></svg>
<span class="t c lbl" style="left:976.33px;top:157.56px;">สไตล์</span>
<div class="sep" style="left:1070.33px;top:83.33px;height:87.78px"></div>
<svg style="left:1082.0px;top:83.11px;width:36px;height:36px" viewBox="-18 -18 36 36" fill="none" ><path d="M-14.0 -10.5 V10.5 M-4.666666666666666 -10.5 V10.5 M4.666666666666668 -10.5 V10.5 M14.0 -10.5 V10.5 M-14 -10.5 H14 M-14 -3.5 H14 M-14 3.5 H14 M-14 10.5 H14" stroke="#555" stroke-width="1.1"/><rect x="-5" y="-3.5" width="20" height="7" fill="#6db0ec" stroke="#2b88d8" stroke-width="1.1"/><path d="M-16 0 L-10.5 -5.5 V-2.6 H-3 V2.6 H-10.5 V5.5 Z" fill="#fff" stroke="#2b88d8" stroke-width="1.3" stroke-linejoin="round"/></svg>
<span class="t c" style="left:1099.22px;top:117.22px;">แทรก</span>
<svg style="left:1091.22px;top:134.56px;width:16px;height:16px" viewBox="-8 -8 16 16" fill="none" ><path d="M-2.75 -1.375 L0 1.375 L2.75 -1.375" stroke="#444" stroke-width="1.3" stroke-linecap="round" stroke-linejoin="round"/></svg>
<svg style="left:1125.89px;top:83.11px;width:36px;height:36px" viewBox="-18 -18 36 36" fill="none" ><path d="M-14.0 -10.5 V10.5 M-4.666666666666666 -10.5 V10.5 M4.666666666666668 -10.5 V10.5 M14.0 -10.5 V10.5 M-14 -10.5 H14 M-14 -3.5 H14 M-14 3.5 H14 M-14 10.5 H14" stroke="#555" stroke-width="1.1"/><rect x="-15" y="-3.4" width="4" height="6.8" fill="#fff"/><rect x="-10" y="-3.5" width="14" height="7" fill="#6db0ec" stroke="#2b88d8" stroke-width="1.1"/><rect x="3" y="-6.5" width="13" height="13" fill="#fff"/><path d="M4.5 -5 L14.5 5 M14.5 -5 L4.5 5" stroke="#e8384f" stroke-width="1.5" stroke-linecap="round"/></svg>
<span class="t c" style="left:1143.11px;top:117.22px;">ลบ</span>
<svg style="left:1135.11px;top:134.56px;width:16px;height:16px" viewBox="-8 -8 16 16" fill="none" ><path d="M-2.75 -1.375 L0 1.375 L2.75 -1.375" stroke="#444" stroke-width="1.3" stroke-linecap="round" stroke-linejoin="round"/></svg>
<svg style="left:1169.78px;top:83.11px;width:36px;height:36px" viewBox="-18 -18 36 36" fill="none" ><path d="M-14.0 -10.3 V10.7 M-4.666666666666666 -10.3 V10.7 M4.666666666666668 -10.3 V10.7 M14.0 -10.3 V10.7 M-14 -10.3 H14 M-14 -3.3000000000000007 H14 M-14 3.6999999999999993 H14 M-14 10.7 H14" stroke="#555" stroke-width="1.1"/><rect x="-6.166666666666666" y="-3.3000000000000007" width="12.333333333333334" height="7" fill="#6db0ec" stroke="#2b88d8" stroke-width="1.1"/><path d="M-7.5 -14.4 H7.5 M-7.5 -16.2 V-12.6 M7.5 -16.2 V-12.6" stroke="#2b88d8" stroke-width="1.2"/></svg>
<span class="t c" style="left:1187.56px;top:117.22px;">รูปแบบ</span>
<svg style="left:1179.56px;top:134.56px;width:16px;height:16px" viewBox="-8 -8 16 16" fill="none" ><path d="M-2.75 -1.375 L0 1.375 L2.75 -1.375" stroke="#444" stroke-width="1.3" stroke-linecap="round" stroke-linejoin="round"/></svg>
<span class="t c lbl" style="left:1143.89px;top:157.56px;">เซลล์</span>
<div class="sep" style="left:1215.56px;top:83.33px;height:87.78px"></div>
<svg style="left:1227.54px;top:84.98px;width:18.26px;height:18.26px" viewBox="-11 -11 22 22" fill="none" ><path d="M7 -5.5 V-8 H-6.5 L1 0 L-6.5 8 H7 V5.5" stroke="#3b3b3b" stroke-width="1.4" stroke-linejoin="round" stroke-linecap="round"/></svg>
<span class="t" style="left:1250.0px;top:84.0px;">ผลรวมอัตโนมัติ</span>
<svg style="left:1328.11px;top:86.78px;width:16px;height:16px" viewBox="-8 -8 16 16" fill="none" ><path d="M-2.75 -1.375 L0 1.375 L2.75 -1.375" stroke="#444" stroke-width="1.3" stroke-linecap="round" stroke-linejoin="round"/></svg>
<svg style="left:1226.56px;top:109.56px;width:20.88px;height:20.88px" viewBox="-12 -12 24 24" fill="none" ><rect x="-8" y="-7" width="16" height="14" rx="1" stroke="#444" stroke-width="1.3"/><path d="M-8 -3.5 H8" stroke="#444" stroke-width="2.2"/><path d="M0 -1 V4.5 M-2.8 2 L0 4.8 L2.8 2" stroke="#2b88d8" stroke-width="1.4" stroke-linecap="round" stroke-linejoin="round"/></svg>
<span class="t" style="left:1250.0px;top:110.0px;">เติม</span>
<svg style="left:1264.56px;top:112.78px;width:16px;height:16px" viewBox="-8 -8 16 16" fill="none" ><path d="M-2.75 -1.375 L0 1.375 L2.75 -1.375" stroke="#444" stroke-width="1.3" stroke-linecap="round" stroke-linejoin="round"/></svg>
<svg style="left:1226.11px;top:135.33px;width:21.12px;height:21.12px" viewBox="-12 -12 24 24" fill="none" ><g transform="rotate(-40)"><rect x="-8" y="-4.2" width="16" height="8.4" rx="1" fill="#fff" stroke="#a53fb4" stroke-width="1.5"/><rect x="-8" y="-4.2" width="5.2" height="8.4" fill="#d9a5e0" stroke="#a53fb4" stroke-width="1.5"/></g></svg>
<span class="t" style="left:1250.0px;top:135.89px;">ล้าง</span>
<svg style="left:1264.56px;top:138.67px;width:16px;height:16px" viewBox="-8 -8 16 16" fill="none" ><path d="M-2.75 -1.375 L0 1.375 L2.75 -1.375" stroke="#444" stroke-width="1.3" stroke-linecap="round" stroke-linejoin="round"/></svg>
<svg style="left:1360.11px;top:83.67px;width:36px;height:36px" viewBox="-18 -18 36 36" fill="none" ><text x="-15" y="-2" font-family="Liberation Sans,sans-serif" font-size="13.5" fill="#2b88d8">A</text><text x="-14.5" y="12.5" font-family="Liberation Sans,sans-serif" font-size="13.5" fill="#444">Z</text><path d="M-3 -5.5 H12 L6.5 1.5 V9 L2.5 6.5 V1.5 Z" stroke="#444" stroke-width="1.3" stroke-linejoin="round"/></svg>
<span class="t c" style="left:1377.78px;top:116.11px;">เรียงลำดับ</span>
<span class="t c" style="left:1374.22px;top:131.33px;">และกรอง</span>
<svg style="left:1390.56px;top:134.0px;width:16px;height:16px" viewBox="-8 -8 16 16" fill="none" ><path d="M-2.75 -1.375 L0 1.375 L2.75 -1.375" stroke="#444" stroke-width="1.3" stroke-linecap="round" stroke-linejoin="round"/></svg>
<svg style="left:1413.67px;top:83.67px;width:36px;height:36px" viewBox="-18 -18 36 36" fill="none" ><circle cx="3.5" cy="-4" r="9.3" stroke="#444" stroke-width="1.3"/><path d="M-3.2 2.8 L-13.5 13" stroke="#444" stroke-width="1.5" stroke-linecap="round"/></svg>
<span class="t c" style="left:1431.11px;top:116.11px;">ค้นหาและ</span>
<span class="t c" style="left:1427.56px;top:131.33px;">เลือก</span>
<svg style="left:1435.67px;top:134.0px;width:16px;height:16px" viewBox="-8 -8 16 16" fill="none" ><path d="M-2.75 -1.375 L0 1.375 L2.75 -1.375" stroke="#444" stroke-width="1.3" stroke-linecap="round" stroke-linejoin="round"/></svg>
<span class="t c lbl" style="left:1339.44px;top:157.56px;">การแก้ไข</span>
<div class="sep" style="left:1461.89px;top:83.33px;height:87.78px"></div>
<svg style="left:1477.89px;top:84.78px;width:32px;height:32px" viewBox="-16 -16 32 32" fill="none" ><rect x="-13.5" y="-13.5" width="27" height="27" stroke="#d9531e" stroke-width="1.3"/><rect x="-9.5" y="-9.5" width="8" height="8" stroke="#d9531e" stroke-width="1.2"/><rect x="1.5" y="-9.5" width="8" height="8" stroke="#d9531e" stroke-width="1.2"/><rect x="-9.5" y="1.5" width="8" height="8" stroke="#d9531e" stroke-width="1.2"/><rect x="1.5" y="1.5" width="8" height="8" stroke="#d9531e" stroke-width="1.2"/></svg>
<span class="t c" style="left:1493.89px;top:116.0px;font-weight:400;font-size:12.6px;letter-spacing:-.4px">Add-ins</span>
<span class="t c lbl" style="left:1493.89px;top:157.56px;font-weight:400;font-size:11.4px;letter-spacing:-.3px">Add-in</span>
<div class="sep" style="left:1525.0px;top:83.33px;height:87.78px"></div>
<svg style="left:1542.22px;top:84.11px;width:34px;height:34px" viewBox="-17 -17 34 34" fill="none" ><defs><linearGradient id="cpa" x1="0" y1="0" x2="0" y2="1"><stop offset="0" stop-color="#2b8fe8"/><stop offset=".28" stop-color="#3dbb6a"/><stop offset=".52" stop-color="#f5c518"/><stop offset=".74" stop-color="#f58220"/><stop offset="1" stop-color="#e8407e"/></linearGradient><linearGradient id="cpb" x1="0" y1="0" x2="0" y2="1"><stop offset="0" stop-color="#2f86e8"/><stop offset=".5" stop-color="#8e5cf2"/><stop offset="1" stop-color="#e65ca8"/></linearGradient></defs><path d="M-3 -13.5 H4 C6.5 -13.5 7.8 -12.3 8.5 -10 L9.3 -7.3 H5.8 C3.8 -7.3 2.5 -6.3 1.8 -4.1 L-2.2 8.9 C-2.9 11.2 -4.2 12.5 -6.7 12.5 H-10.7 C-13.7 12.5 -15.2 10.5 -14.3 7.5 L-10 -7.5 C-9.1 -11 -7.3 -13.5 -3 -13.5 Z" fill="url(#cpa)"/><path d="M3 13.5 H-4 C-6.5 13.5 -7.8 12.3 -8.5 10 L-9.3 7.3 H-5.8 C-3.8 7.3 -2.5 6.3 -1.8 4.1 L2.2 -8.9 C2.9 -11.2 4.2 -12.5 6.7 -12.5 H10.7 C13.7 -12.5 15.2 -10.5 14.3 -7.5 L10 7.5 C9.1 11 7.3 13.5 3 13.5 Z" fill="url(#cpb)"/><path d="M-3 -13.5 H4 C6.5 -13.5 7.8 -12.3 8.5 -10 L9.3 -7.3 H5.8 C3.8 -7.3 2.5 -6.3 1.8 -4.1 L0.6 -0.2 L-1.2 -6.5 C-2 -9.5 -3.5 -11 -6.5 -12.2 C-5.5 -13 -4.4 -13.5 -3 -13.5 Z" fill="#2b8fe8"/></svg>
<span class="t c" style="left:1559.22px;top:116.0px;font-weight:400;font-size:12.6px;letter-spacing:-.4px">Copilot</span>
<div class="sep" style="left:1593.22px;top:83.33px;height:87.78px"></div>
<svg style="left:1610.0px;top:83.78px;width:34px;height:34px" viewBox="-17 -17 34 34" fill="none" ><circle cx="0" cy="0" r="16" fill="#333"/><text x="0" y="4.4" text-anchor="middle" font-family="Liberation Sans,sans-serif" font-weight="bold" font-size="12" fill="#fff">GPT</text></svg>
<span class="t c" style="left:1626.67px;top:116.0px;font-weight:400;font-size:12.6px;letter-spacing:-.4px">ChatGPT</span>
<span class="t c" style="left:1626.67px;top:131.11px;font-weight:400;font-size:12.6px;letter-spacing:-.4px">for Excel</span>
<span class="t c lbl" style="left:1626.67px;top:157.56px;font-weight:400;font-size:11.4px;letter-spacing:-.3px">AI</span>
<div class="sep" style="left:1659.0px;top:83.33px;height:87.78px"></div>
<svg style="left:1677.78px;top:83.78px;width:34px;height:34px" viewBox="-17 -17 34 34" fill="none" ><rect x="-16" y="-16" width="32" height="32" rx="7" fill="#19a37f"/><ellipse cx="0" cy="-5.6" rx="5.6" ry="7.8" transform="rotate(0)" stroke="#fff" stroke-width="2.1" fill="none"/><ellipse cx="0" cy="-5.6" rx="5.6" ry="7.8" transform="rotate(60)" stroke="#fff" stroke-width="2.1" fill="none"/><ellipse cx="0" cy="-5.6" rx="5.6" ry="7.8" transform="rotate(120)" stroke="#fff" stroke-width="2.1" fill="none"/><ellipse cx="0" cy="-5.6" rx="5.6" ry="7.8" transform="rotate(180)" stroke="#fff" stroke-width="2.1" fill="none"/><ellipse cx="0" cy="-5.6" rx="5.6" ry="7.8" transform="rotate(240)" stroke="#fff" stroke-width="2.1" fill="none"/><ellipse cx="0" cy="-5.6" rx="5.6" ry="7.8" transform="rotate(300)" stroke="#fff" stroke-width="2.1" fill="none"/><path d="M-7 4.5 L8.5 -5.5 C10.5 -6.5 11.5 -5 9.8 -3.6 L4 0.5 L5 8 L3 9 L0.5 3 L-4 6 L-3.5 8.5 L-5 9.3 L-6.3 6 L-9.3 4.2 L-8 3.2 Z M0.5 -0.5 L-6.5 -4 L-4.5 -5.2 L4.5 -3 Z" fill="#111"/></svg>
<span class="t c" style="left:1694.78px;top:116.0px;font-weight:400;font-size:12.6px;letter-spacing:-.4px">Autopilot</span>
<span class="t c lbl" style="left:1694.78px;top:157.56px;font-weight:400;font-size:11.4px;letter-spacing:-.3px">be amazing</span>
<div class="sep" style="left:1729.89px;top:83.33px;height:87.78px"></div>
<svg style="left:1753.89px;top:83.78px;width:34px;height:34px" viewBox="-17 -17 34 34" fill="none" ><rect x="-16" y="-16" width="32" height="32" rx="7" fill="#2a2a4e"/><path d="M-3.5 -10 C-7.5 -11 -10 -8 -9 -5 C-12 -3.5 -12 1 -9 2.5 C-10 6 -7 9 -3.5 8 M-9 -5 C-7 -5.5 -5.5 -4.5 -5 -3 M-9 2.5 C-7.5 3 -6 2 -5.5 0.5" stroke="#fff" stroke-width="1.7" fill="none" stroke-linecap="round"/><path d="M3.5 -10 C7.5 -11 10 -8 9 -5 C12 -3.5 12 1 9 2.5 C10 6 7 9 3.5 8 M9 -5 C7 -5.5 5.5 -4.5 5 -3 M9 2.5 C7.5 3 6 2 5.5 0.5" stroke="#fff" stroke-width="1.7" fill="none" stroke-linecap="round"/><path d="M2.5 -12 L-3.5 0.5 H0.5 L-2.5 12 L4 -2 H0 Z" fill="#35c98b"/></svg>
<span class="t c" style="left:1770.89px;top:116.0px;font-weight:400;font-size:12.6px;letter-spacing:-.4px">GPT for</span>
<span class="t c" style="left:1770.89px;top:131.11px;font-weight:400;font-size:12.6px;letter-spacing:-.4px">Excel Word</span>
<span class="t c lbl" style="left:1770.89px;top:157.56px;font-weight:400;font-size:11.4px;letter-spacing:-.3px">gptforwork.com</span>
<div class="sep" style="left:1810.56px;top:83.33px;height:87.78px"></div>
<svg style="left:1889.44px;top:156.78px;width:16px;height:16px" viewBox="-8 -8 16 16" fill="none" ><path d="M-4.0 -2.0 L0 2.0 L4.0 -2.0" stroke="#333" stroke-width="1.3" stroke-linecap="round" stroke-linejoin="round"/></svg>
</div>
<div id="fbar" style="left:0;top:180.0px;width:1920px;height:35.56px">
<div class="box" style="left:8.56px;top:7.0px;width:102.0px;height:20.78px"></div>
<span class="t" style="left:15.0px;top:7.559999999999999px;font-size:12.4px;color:#222">A1</span>
<svg style="left:91.22px;top:10.33px;width:16px;height:16px" viewBox="-8 -8 16 16" fill="none" ><path d="M-4.0 -2.0 L0 2.0 L4.0 -2.0" stroke="#333" stroke-width="1.3" stroke-linecap="round" stroke-linejoin="round"/></svg>
<div style="left:120.0px;top:13.33px;width:2px;height:2px;background:#444;border-radius:1px"></div>
<div style="left:120.0px;top:17.33px;width:2px;height:2px;background:#444;border-radius:1px"></div>
<div style="left:120.0px;top:21.33px;width:2px;height:2px;background:#444;border-radius:1px"></div>
<div class="box" style="left:131.89px;top:7.0px;width:83.89px;height:20.78px"></div>
<svg style="left:133.89px;top:7.56px;width:20px;height:20px" viewBox="-10 -10 20 20" fill="none" ><path d="M-5.111111111111111 -5.111111111111111 L5.111111111111111 5.111111111111111 M5.111111111111111 -5.111111111111111 L-5.111111111111111 5.111111111111111" stroke="#b5b5b5" stroke-width="1.3" stroke-linecap="round"/></svg>
<svg style="left:157.78px;top:7.56px;width:20px;height:20px" viewBox="-10 -10 20 20" fill="none" ><path d="M-7 0.5 L-2.5 5 L7 -5" stroke="#b5b5b5" stroke-width="1.3" stroke-linecap="round" stroke-linejoin="round"/></svg>
<span class="t" style="left:185.0px;top:6.0px;font:italic bold 15.5px 'Liberation Serif',serif;color:#333;line-height:20px">fx</span>
<svg style="left:201.56px;top:10.33px;width:16px;height:16px" viewBox="-8 -8 16 16" fill="none" ><path d="M-3.5 -1.75 L0 1.75 L3.5 -1.75" stroke="#888" stroke-width="1.3" stroke-linecap="round" stroke-linejoin="round"/></svg>
<div class="box" style="left:221.67px;top:7.0px;width:1689.44px;height:20.78px"></div>
<span class="t" style="left:233.89px;top:7.219999999999999px;font-size:12.8px;color:#222;font-weight:400;font-family:'Liberation Sans','Loma','Noto Sans Thai Looped',sans-serif">เลขทะเบียน</span>
<svg style="left:1894.67px;top:8.67px;width:16px;height:16px" viewBox="-8 -8 16 16" fill="none" ><path d="M-3.5 -1.75 L0 1.75 L3.5 -1.75" stroke="#444" stroke-width="1.3" stroke-linecap="round" stroke-linejoin="round"/></svg>
</div>
<div id="grid" style="left:0;top:216.0px;width:1920.0px;height:770.89px">
<div class="corner" style="left:0;top:0;width:28.0px;height:18.22px"><i></i></div>
<div class="ch sel" style="left:28.0px;top:0;width:125.61px;height:18.22px">A</div>
<div class="ch" style="left:153.61px;top:0;width:364.72px;height:18.22px">B</div>
<div class="ch" style="left:518.33px;top:0;width:100.67px;height:18.22px">C</div>
<div class="ch" style="left:619.0px;top:0;width:125.44px;height:18.22px">D</div>
<div class="ch" style="left:744.44px;top:0;width:100.89px;height:18.22px">E</div>
<div class="ch" style="left:845.33px;top:0;width:332.56px;height:18.22px">F</div>
<div class="ch" style="left:1177.89px;top:0;width:325.44px;height:18.22px">G</div>
<div class="ch" style="left:1503.33px;top:0;width:101.22px;height:18.22px">H</div>
<div class="ch" style="left:1604.56px;top:0;width:100.78px;height:18.22px">I</div>
<div class="ch" style="left:1705.33px;top:0;width:100.78px;height:18.22px">J</div>
<div class="ch" style="left:1806.11px;top:0;width:91.0px;height:18.22px">K</div>
<div class="rh sel" style="left:0;top:18.22px;width:28.0px;height:33.11px"><span>1</span></div>
<div class="c hd" style="left:28.0px;top:18.22px;width:125.61px;height:33.11px"><span>เลขทะเบียน</span></div>
<div class="c hd" style="left:153.61px;top:18.22px;width:364.72px;height:33.11px"><span>ชื่อนิติบุคคล</span></div>
<div class="c hd" style="left:518.33px;top:18.22px;width:100.67px;height:33.11px"><span>วันที่จดทะเบียน</span></div>
<div class="c hd" style="left:619.0px;top:18.22px;width:125.44px;height:33.11px"><span>ทุนจดทะเบียน(บาท)</span></div>
<div class="c hd" style="left:744.44px;top:18.22px;width:100.89px;height:33.11px"><span>รหัสวัตถุประสงค์</span></div>
<div class="c hd" style="left:845.33px;top:18.22px;width:332.56px;height:33.11px"><span>รายละเอียดวัตถุประสงค์</span></div>
<div class="c hd" style="left:1177.89px;top:18.22px;width:325.44px;height:33.11px"><span>ที่ตั้งสำนักงานใหญ่</span></div>
<div class="c hd" style="left:1503.33px;top:18.22px;width:101.22px;height:33.11px"><span>ตำบล</span></div>
<div class="c hd" style="left:1604.56px;top:18.22px;width:100.78px;height:33.11px"><span>อำเภอ</span></div>
<div class="c hd" style="left:1705.33px;top:18.22px;width:100.78px;height:33.11px"><span>จังหวัด</span></div>
<div class="c hd" style="left:1806.11px;top:18.22px;width:91.0px;height:33.11px"><span>รหัสไปรษณีย์</span></div>
<div class="rh" style="left:0;top:51.33px;width:28.0px;height:26.0px"><span>2</span></div>
<div class="c g c" style="left:28.0px;top:51.33px;width:125.61px;height:26.0px"><span>0105568234026</span></div>
<div class="c k l" style="left:153.61px;top:51.33px;width:364.72px;height:26.0px"><span>บจ.อไรซ์ เวนเจอร์ส กรุ๊ป จำกัด</span></div>
<div class="c g c" style="left:518.33px;top:51.33px;width:100.67px;height:26.0px"><span>12/9/2568</span></div>
<div class="c k r" style="left:619.0px;top:51.33px;width:125.44px;height:26.0px"><span>922,048,000</span></div>
<div class="c g c" style="left:744.44px;top:51.33px;width:100.89px;height:26.0px"><span>64202</span></div>
<div class="c k l" style="left:845.33px;top:51.33px;width:332.56px;height:26.0px"><span>ดำเนินการจัดตั้งสาขา บริษัทย่อย บริษัทร่วมกัน สำนักงานตัวแทน</span></div>
<div class="c g l" style="left:1177.89px;top:51.33px;width:325.44px;height:26.0px"><span>111 ทรู ดิจิทัล พาร์ค เวสต์  อาคารยูนิคอร์น ชั้น 5 ถนนสุขุมวิท</span></div>
<div class="c k l" style="left:1503.33px;top:51.33px;width:101.22px;height:26.0px"><span>แขวงบางจาก</span></div>
<div class="c g l" style="left:1604.56px;top:51.33px;width:100.78px;height:26.0px"><span>เขตพระโขนง</span></div>
<div class="c k l" style="left:1705.33px;top:51.33px;width:100.78px;height:26.0px"><span>กรุงเทพมหานคร</span></div>
<div class="c g c" style="left:1806.11px;top:51.33px;width:91.0px;height:26.0px"><span>10260</span></div>
<div class="rh" style="left:0;top:77.33px;width:28.0px;height:26.0px"><span>3</span></div>
<div class="c g c" style="left:28.0px;top:77.33px;width:125.61px;height:26.0px"><span>0105568234581</span></div>
<div class="c k l" style="left:153.61px;top:77.33px;width:364.72px;height:26.0px"><span>บจ.เอเทอร์น่า อิมพิเรียม กรุ๊ป จำกัด</span></div>
<div class="c g c" style="left:518.33px;top:77.33px;width:100.67px;height:26.0px"><span>12/9/2568</span></div>
<div class="c k r" style="left:619.0px;top:77.33px;width:125.44px;height:26.0px"><span>518,000,000</span></div>
<div class="c g c" style="left:744.44px;top:77.33px;width:100.89px;height:26.0px"><span>46414</span></div>
<div class="c k l" style="left:845.33px;top:77.33px;width:332.56px;height:26.0px"><span>ประกอบกิจการ นำเข้า-ส่งออกและจำหน่าย สินค้าอุปโภคบริโภค</span></div>
<div class="c g l" style="left:1177.89px;top:77.33px;width:325.44px;height:26.0px"><span>195  อาคารวัน แบงค็อก ทาวเวอร์ 4 ชั้นที่ 28 ถนนวิทยุ</span></div>
<div class="c k l" style="left:1503.33px;top:77.33px;width:101.22px;height:26.0px"><span>แขวงลุมพินี</span></div>
<div class="c g l" style="left:1604.56px;top:77.33px;width:100.78px;height:26.0px"><span>เขตปทุมวัน</span></div>
<div class="c k l" style="left:1705.33px;top:77.33px;width:100.78px;height:26.0px"><span>กรุงเทพมหานคร</span></div>
<div class="c g c" style="left:1806.11px;top:77.33px;width:91.0px;height:26.0px"><span>10330</span></div>
<div class="rh" style="left:0;top:103.33px;width:28.0px;height:26.0px"><span>4</span></div>
<div class="c g c" style="left:28.0px;top:103.33px;width:125.61px;height:26.0px"><span>0105568239982</span></div>
<div class="c k l" style="left:153.61px;top:103.33px;width:364.72px;height:26.0px"><span>บจ.ทีเคคิวเอช โฮลดิ้งส์ จำกัด</span></div>
<div class="c g c" style="left:518.33px;top:103.33px;width:100.67px;height:26.0px"><span>19/12/2568</span></div>
<div class="c k r" style="left:619.0px;top:103.33px;width:125.44px;height:26.0px"><span>500,000,000</span></div>
<div class="c g c" style="left:744.44px;top:103.33px;width:100.89px;height:26.0px"><span>64202</span></div>
<div class="c k l" style="left:845.33px;top:103.33px;width:332.56px;height:26.0px"><span>เข้าเป็นหุ้นส่วนจำกัดความรับผิดในห้างหุ้นส่วนจำกัด เป็นผู้ถือหุ้นใน</span></div>
<div class="c g l" style="left:1177.89px;top:103.33px;width:325.44px;height:26.0px"><span>789/10  ซอยพัฒนาการ 32</span></div>
<div class="c k l" style="left:1503.33px;top:103.33px;width:101.22px;height:26.0px"><span>แขวงสวนหลวง</span></div>
<div class="c g l" style="left:1604.56px;top:103.33px;width:100.78px;height:26.0px"><span>เขตสวนหลวง</span></div>
<div class="c k l" style="left:1705.33px;top:103.33px;width:100.78px;height:26.0px"><span>กรุงเทพมหานคร</span></div>
<div class="c g c" style="left:1806.11px;top:103.33px;width:91.0px;height:26.0px"><span>10250</span></div>
<div class="rh" style="left:0;top:129.33px;width:28.0px;height:26.0px"><span>5</span></div>
<div class="c g c" style="left:28.0px;top:129.33px;width:125.61px;height:26.0px"><span>0105568237645</span></div>
<div class="c k l" style="left:153.61px;top:129.33px;width:364.72px;height:26.0px"><span>บจ.ร่วมจิตต์ โฮลดิ้ง จำกัด</span></div>
<div class="c g c" style="left:518.33px;top:129.33px;width:100.67px;height:26.0px"><span>16/12/2568</span></div>
<div class="c k r" style="left:619.0px;top:129.33px;width:125.44px;height:26.0px"><span>171,000,000</span></div>
<div class="c g c" style="left:744.44px;top:129.33px;width:100.89px;height:26.0px"><span>64202</span></div>
<div class="c k l" style="left:845.33px;top:129.33px;width:332.56px;height:26.0px"><span>ประกอบกิจการลงทุนหรือถือหุ้นในกิจการของผู้อื่น ทั้งในประเทศ</span></div>
<div class="c g l" style="left:1177.89px;top:129.33px;width:325.44px;height:26.0px"><span>199  ถนนสุขุมวิท</span></div>
<div class="c k l" style="left:1503.33px;top:129.33px;width:101.22px;height:26.0px"><span>แขวงคลองเตยเหนือ</span></div>
<div class="c g l" style="left:1604.56px;top:129.33px;width:100.78px;height:26.0px"><span>เขตวัฒนา</span></div>
<div class="c k l" style="left:1705.33px;top:129.33px;width:100.78px;height:26.0px"><span>กรุงเทพมหานคร</span></div>
<div class="c g c" style="left:1806.11px;top:129.33px;width:91.0px;height:26.0px"><span>10110</span></div>
<div class="rh" style="left:0;top:155.33px;width:28.0px;height:26.0px"><span>6</span></div>
<div class="c g c" style="left:28.0px;top:155.33px;width:125.61px;height:26.0px"><span>0105568232821</span></div>
<div class="c k l" style="left:153.61px;top:155.33px;width:364.72px;height:26.0px"><span>บจ.ไพรมัส แอสเซท โฮลดิ้ง จำกัด</span></div>
<div class="c g c" style="left:518.33px;top:155.33px;width:100.67px;height:26.0px"><span>12/4/2568</span></div>
<div class="c k r" style="left:619.0px;top:155.33px;width:125.44px;height:26.0px"><span>132,700,000</span></div>
<div class="c g c" style="left:744.44px;top:155.33px;width:100.89px;height:26.0px"><span>64202</span></div>
<div class="c k l" style="left:845.33px;top:155.33px;width:332.56px;height:26.0px"><span>ประกอบธุรกิจการลงทุนในธุรกิจอื่นๆ ทั้งพาณิชยกรรม อุตสาหกรรม</span></div>
<div class="c g l" style="left:1177.89px;top:155.33px;width:325.44px;height:26.0px"><span>909/1  อาคารซีเอ็มซี ทาวเวอร์  ห้องเลขที่ 703 ชั้นที่ 7 ถนนสมเด็จ</span></div>
<div class="c k l" style="left:1503.33px;top:155.33px;width:101.22px;height:26.0px"><span>แขวงดาวคะนอง</span></div>
<div class="c g l" style="left:1604.56px;top:155.33px;width:100.78px;height:26.0px"><span>เขตธนบุรี</span></div>
<div class="c k l" style="left:1705.33px;top:155.33px;width:100.78px;height:26.0px"><span>กรุงเทพมหานคร</span></div>
<div class="c g c" style="left:1806.11px;top:155.33px;width:91.0px;height:26.0px"><span>10600</span></div>
<div class="rh" style="left:0;top:181.33px;width:28.0px;height:26.0px"><span>7</span></div>
<div class="c g c" style="left:28.0px;top:181.33px;width:125.61px;height:26.0px"><span>0105568239192</span></div>
<div class="c k l" style="left:153.61px;top:181.33px;width:364.72px;height:26.0px"><span>บจ.ศรีสวัสดิ์ พร็อพเพอร์ตี้ โซลูชั่นส์ คาซ่า จำกัด</span></div>
<div class="c g c" style="left:518.33px;top:181.33px;width:100.67px;height:26.0px"><span>18/12/2568</span></div>
<div class="c k r" style="left:619.0px;top:181.33px;width:125.44px;height:26.0px"><span>100,000,000</span></div>
<div class="c g c" style="left:744.44px;top:181.33px;width:100.89px;height:26.0px"><span>64929</span></div>
<div class="c k l" style="left:845.33px;top:181.33px;width:332.56px;height:26.0px"><span>ประกอบธุรกิจ ให้กู้ ซื้อ ขาย รับจำนอง อสังหาริมทรัพย์ และสังหา</span></div>
<div class="c g l" style="left:1177.89px;top:181.33px;width:325.44px;height:26.0px"><span>99/392  อาคารศรีสวัสดิ์ ชั้นที่ 2 ซอยแจ้งวัฒนะ 10 แยก 3 (เบ</span></div>
<div class="c k l" style="left:1503.33px;top:181.33px;width:101.22px;height:26.0px"><span>แขวงทุ่งสองห้อง</span></div>
<div class="c g l" style="left:1604.56px;top:181.33px;width:100.78px;height:26.0px"><span>เขตหลักสี่</span></div>
<div class="c k l" style="left:1705.33px;top:181.33px;width:100.78px;height:26.0px"><span>กรุงเทพมหานคร</span></div>
<div class="c g c" style="left:1806.11px;top:181.33px;width:91.0px;height:26.0px"><span>10210</span></div>
<div class="rh" style="left:0;top:207.33px;width:28.0px;height:26.0px"><span>8</span></div>
<div class="c g c" style="left:28.0px;top:207.33px;width:125.61px;height:26.0px"><span>0105568241669</span></div>
<div class="c k l" style="left:153.61px;top:207.33px;width:364.72px;height:26.0px"><span>บจ.โจว ไท ฟุก จิวเวลเลอรี่ (ประเทศไทย) จำกัด</span></div>
<div class="c g c" style="left:518.33px;top:207.33px;width:100.67px;height:26.0px"><span>24/12/2568</span></div>
<div class="c k r" style="left:619.0px;top:207.33px;width:125.44px;height:26.0px"><span>100,000,000</span></div>
<div class="c g c" style="left:744.44px;top:207.33px;width:100.89px;height:26.0px"><span>47732</span></div>
<div class="c k l" style="left:845.33px;top:207.33px;width:332.56px;height:26.0px"><span>ประกอบกิจการค้าปลีกและค้าส่งเครื่องประดับทุกชนิดทุกประเภท</span></div>
<div class="c g l" style="left:1177.89px;top:207.33px;width:325.44px;height:26.0px"><span>999/9  อาคารดิออฟฟิศเศส แอท เซ็นทรัลเวิลด์ ชั้น 3  ห้องเลขที่</span></div>
<div class="c k l" style="left:1503.33px;top:207.33px;width:101.22px;height:26.0px"><span>แขวงปทุมวัน</span></div>
<div class="c g l" style="left:1604.56px;top:207.33px;width:100.78px;height:26.0px"><span>เขตปทุมวัน</span></div>
<div class="c k l" style="left:1705.33px;top:207.33px;width:100.78px;height:26.0px"><span>กรุงเทพมหานคร</span></div>
<div class="c g c" style="left:1806.11px;top:207.33px;width:91.0px;height:26.0px"><span>10330</span></div>
<div class="rh" style="left:0;top:233.33px;width:28.0px;height:26.0px"><span>9</span></div>
<div class="c g c" style="left:28.0px;top:233.33px;width:125.61px;height:26.0px"><span>0105568242762</span></div>
<div class="c k l" style="left:153.61px;top:233.33px;width:364.72px;height:26.0px"><span>บจ.อีวีว่า ซุปเปอร์ชาร์จ เทคโนโลยี จำกัด</span></div>
<div class="c g c" style="left:518.33px;top:233.33px;width:100.67px;height:26.0px"><span>26/12/2568</span></div>
<div class="c k r" style="left:619.0px;top:233.33px;width:125.44px;height:26.0px"><span>100,000,000</span></div>
<div class="c g c" style="left:744.44px;top:233.33px;width:100.89px;height:26.0px"><span>35101</span></div>
<div class="c k l" style="left:845.33px;top:233.33px;width:332.56px;height:26.0px"><span>ประกอบกิจการให้บริการเทคโนโลยีการผลิตไฟฟ้าพลังงานแสงอาทิตย์</span></div>
<div class="c g l" style="left:1177.89px;top:233.33px;width:325.44px;height:26.0px"><span>87/1  อาคารแคปปิตอล ทาวเวอร์ ออล ซีซั่นส์ เพลส ยูนิตที่ 701</span></div>
<div class="c k l" style="left:1503.33px;top:233.33px;width:101.22px;height:26.0px"><span>แขวงลุมพินี</span></div>
<div class="c g l" style="left:1604.56px;top:233.33px;width:100.78px;height:26.0px"><span>เขตปทุมวัน</span></div>
<div class="c k l" style="left:1705.33px;top:233.33px;width:100.78px;height:26.0px"><span>กรุงเทพมหานคร</span></div>
<div class="c g c" style="left:1806.11px;top:233.33px;width:91.0px;height:26.0px"><span>10330</span></div>
<div class="rh" style="left:0;top:259.33px;width:28.0px;height:26.0px"><span>10</span></div>
<div class="c g c" style="left:28.0px;top:259.33px;width:125.61px;height:26.0px"><span>0105568231027</span></div>
<div class="c k l" style="left:153.61px;top:259.33px;width:364.72px;height:26.0px"><span>บจ.เอ็มไอเอส เอ็ดดูเคชั่น เซอร์วิสเซส จำกัด</span></div>
<div class="c g c" style="left:518.33px;top:259.33px;width:100.67px;height:26.0px"><span>12/2/2568</span></div>
<div class="c k r" style="left:619.0px;top:259.33px;width:125.44px;height:26.0px"><span>60,916,760</span></div>
<div class="c g c" style="left:744.44px;top:259.33px;width:100.89px;height:26.0px"><span>85493</span></div>
<div class="c k l" style="left:845.33px;top:259.33px;width:332.56px;height:26.0px"><span>ประกอบกิจการโรงเรียน โรงเรียนเอกชน โรงเรียนนานาชาติ โรงเรียน</span></div>
<div class="c g l" style="left:1177.89px;top:259.33px;width:325.44px;height:26.0px"><span>87/13  ซอยสุขุมวิท 63 (เอกมัย)</span></div>
<div class="c k l" style="left:1503.33px;top:259.33px;width:101.22px;height:26.0px"><span>แขวงคลองตันเหนือ</span></div>
<div class="c g l" style="left:1604.56px;top:259.33px;width:100.78px;height:26.0px"><span>เขตวัฒนา</span></div>
<div class="c k l" style="left:1705.33px;top:259.33px;width:100.78px;height:26.0px"><span>กรุงเทพมหานคร</span></div>
<div class="c g c" style="left:1806.11px;top:259.33px;width:91.0px;height:26.0px"><span>10110</span></div>
<div class="rh" style="left:0;top:285.33px;width:28.0px;height:26.0px"><span>11</span></div>
<div class="c g c" style="left:28.0px;top:285.33px;width:125.61px;height:26.0px"><span>0105568232457</span></div>
<div class="c k l" style="left:153.61px;top:285.33px;width:364.72px;height:26.0px"><span>บจ.โรบัสต์ รีนิวเอเบิ้ล โซลูชั่น จำกัด</span></div>
<div class="c g c" style="left:518.33px;top:285.33px;width:100.67px;height:26.0px"><span>12/4/2568</span></div>
<div class="c k r" style="left:619.0px;top:285.33px;width:125.44px;height:26.0px"><span>60,000,000</span></div>
<div class="c g c" style="left:744.44px;top:285.33px;width:100.89px;height:26.0px"><span>35101</span></div>
<div class="c k l" style="left:845.33px;top:285.33px;width:332.56px;height:26.0px"><span>ประกอบกิจการผลิตและจำหน่ายพลังงานไฟฟ้า</span></div>
<div class="c g l" style="left:1177.89px;top:285.33px;width:325.44px;height:26.0px"><span>325/14  ถนนหลานหลวง</span></div>
<div class="c k l" style="left:1503.33px;top:285.33px;width:101.22px;height:26.0px"><span>แขวงสี่แยกมหานาค</span></div>
<div class="c g l" style="left:1604.56px;top:285.33px;width:100.78px;height:26.0px"><span>เขตดุสิต</span></div>
<div class="c k l" style="left:1705.33px;top:285.33px;width:100.78px;height:26.0px"><span>กรุงเทพมหานคร</span></div>
<div class="c g c" style="left:1806.11px;top:285.33px;width:91.0px;height:26.0px"><span>10300</span></div>
<div class="rh" style="left:0;top:311.33px;width:28.0px;height:26.0px"><span>12</span></div>
<div class="c g c" style="left:28.0px;top:311.33px;width:125.61px;height:26.0px"><span>0105568232619</span></div>
<div class="c k l" style="left:153.61px;top:311.33px;width:364.72px;height:26.0px"><span>บจ.กรีน โซล่าร์ โซลูชั่น จำกัด</span></div>
<div class="c g c" style="left:518.33px;top:311.33px;width:100.67px;height:26.0px"><span>12/4/2568</span></div>
<div class="c k r" style="left:619.0px;top:311.33px;width:125.44px;height:26.0px"><span>60,000,000</span></div>
<div class="c g c" style="left:744.44px;top:311.33px;width:100.89px;height:26.0px"><span>35101</span></div>
<div class="c k l" style="left:845.33px;top:311.33px;width:332.56px;height:26.0px"><span>ประกอบกิจการผลิตและจำหน่ายพลังงานไฟฟ้า</span></div>
<div class="c g l" style="left:1177.89px;top:311.33px;width:325.44px;height:26.0px"><span>325/14  ถนนหลานหลวง</span></div>
<div class="c k l" style="left:1503.33px;top:311.33px;width:101.22px;height:26.0px"><span>แขวงสี่แยกมหานาค</span></div>
<div class="c g l" style="left:1604.56px;top:311.33px;width:100.78px;height:26.0px"><span>เขตดุสิต</span></div>
<div class="c k l" style="left:1705.33px;top:311.33px;width:100.78px;height:26.0px"><span>กรุงเทพมหานคร</span></div>
<div class="c g c" style="left:1806.11px;top:311.33px;width:91.0px;height:26.0px"><span>10300</span></div>
<div class="rh" style="left:0;top:337.33px;width:28.0px;height:26.0px"><span>13</span></div>
<div class="c g c" style="left:28.0px;top:337.33px;width:125.61px;height:26.0px"><span>0105568232937</span></div>
<div class="c k l" style="left:153.61px;top:337.33px;width:364.72px;height:26.0px"><span>บจ.ซัสเทนเอเบิ้ล โซล่าร์ โซลูชั่น จำกัด</span></div>
<div class="c g c" style="left:518.33px;top:337.33px;width:100.67px;height:26.0px"><span>12/4/2568</span></div>
<div class="c k r" style="left:619.0px;top:337.33px;width:125.44px;height:26.0px"><span>60,000,000</span></div>
<div class="c g c" style="left:744.44px;top:337.33px;width:100.89px;height:26.0px"><span>35101</span></div>
<div class="c k l" style="left:845.33px;top:337.33px;width:332.56px;height:26.0px"><span>ประกอบกิจการผลิตและจำหน่ายพลังงานไฟฟ้า</span></div>
<div class="c g l" style="left:1177.89px;top:337.33px;width:325.44px;height:26.0px"><span>325/14  ถนนหลานหลวง</span></div>
<div class="c k l" style="left:1503.33px;top:337.33px;width:101.22px;height:26.0px"><span>แขวงสี่แยกมหานาค</span></div>
<div class="c g l" style="left:1604.56px;top:337.33px;width:100.78px;height:26.0px"><span>เขตดุสิต</span></div>
<div class="c k l" style="left:1705.33px;top:337.33px;width:100.78px;height:26.0px"><span>กรุงเทพมหานคร</span></div>
<div class="c g c" style="left:1806.11px;top:337.33px;width:91.0px;height:26.0px"><span>10300</span></div>
<div class="rh" style="left:0;top:363.33px;width:28.0px;height:26.0px"><span>14</span></div>
<div class="c g c" style="left:28.0px;top:363.33px;width:125.61px;height:26.0px"><span>0105568233291</span></div>
<div class="c k l" style="left:153.61px;top:363.33px;width:364.72px;height:26.0px"><span>บจ.รีนิวเอเบิ้ล โซล่าร์ เอนเนอร์จี้ จำกัด</span></div>
<div class="c g c" style="left:518.33px;top:363.33px;width:100.67px;height:26.0px"><span>12/8/2568</span></div>
<div class="c k r" style="left:619.0px;top:363.33px;width:125.44px;height:26.0px"><span>60,000,000</span></div>
<div class="c g c" style="left:744.44px;top:363.33px;width:100.89px;height:26.0px"><span>35101</span></div>
<div class="c k l" style="left:845.33px;top:363.33px;width:332.56px;height:26.0px"><span>ประกอบกิจการผลิตและจำหน่ายพลังงานไฟฟ้า</span></div>
<div class="c g l" style="left:1177.89px;top:363.33px;width:325.44px;height:26.0px"><span>325/14  ถนนหลานหลวง</span></div>
<div class="c k l" style="left:1503.33px;top:363.33px;width:101.22px;height:26.0px"><span>แขวงสี่แยกมหานาค</span></div>
<div class="c g l" style="left:1604.56px;top:363.33px;width:100.78px;height:26.0px"><span>เขตดุสิต</span></div>
<div class="c k l" style="left:1705.33px;top:363.33px;width:100.78px;height:26.0px"><span>กรุงเทพมหานคร</span></div>
<div class="c g c" style="left:1806.11px;top:363.33px;width:91.0px;height:26.0px"><span>10300</span></div>
<div class="rh" style="left:0;top:389.33px;width:28.0px;height:26.0px"><span>15</span></div>
<div class="c g c" style="left:28.0px;top:389.33px;width:125.61px;height:26.0px"><span>0105568233305</span></div>
<div class="c k l" style="left:153.61px;top:389.33px;width:364.72px;height:26.0px"><span>บจ.รีไฟน์ด์ ซัสเทนเอเบิ้ล เอนเนอร์จี้ จำกัด</span></div>
<div class="c g c" style="left:518.33px;top:389.33px;width:100.67px;height:26.0px"><span>12/8/2568</span></div>
<div class="c k r" style="left:619.0px;top:389.33px;width:125.44px;height:26.0px"><span>60,000,000</span></div>
<div class="c g c" style="left:744.44px;top:389.33px;width:100.89px;height:26.0px"><span>35101</span></div>
<div class="c k l" style="left:845.33px;top:389.33px;width:332.56px;height:26.0px"><span>ประกอบกิจการผลิตและจำหน่ายพลังงานไฟฟ้า</span></div>
<div class="c g l" style="left:1177.89px;top:389.33px;width:325.44px;height:26.0px"><span>325/14  ถนนหลานหลวง</span></div>
<div class="c k l" style="left:1503.33px;top:389.33px;width:101.22px;height:26.0px"><span>แขวงสี่แยกมหานาค</span></div>
<div class="c g l" style="left:1604.56px;top:389.33px;width:100.78px;height:26.0px"><span>เขตดุสิต</span></div>
<div class="c k l" style="left:1705.33px;top:389.33px;width:100.78px;height:26.0px"><span>กรุงเทพมหานคร</span></div>
<div class="c g c" style="left:1806.11px;top:389.33px;width:91.0px;height:26.0px"><span>10300</span></div>
<div class="rh" style="left:0;top:415.33px;width:28.0px;height:26.0px"><span>16</span></div>
<div class="c g c" style="left:28.0px;top:415.33px;width:125.61px;height:26.0px"><span>0105568240832</span></div>
<div class="c k l" style="left:153.61px;top:415.33px;width:364.72px;height:26.0px"><span>บจ.แทร้นควิล พร็อพเพอร์ตี้ จำกัด</span></div>
<div class="c g c" style="left:518.33px;top:415.33px;width:100.67px;height:26.0px"><span>22/12/2568</span></div>
<div class="c k r" style="left:619.0px;top:415.33px;width:125.44px;height:26.0px"><span>60,000,000</span></div>
<div class="c g c" style="left:744.44px;top:415.33px;width:100.89px;height:26.0px"><span>41001</span></div>
<div class="c k l" style="left:845.33px;top:415.33px;width:332.56px;height:26.0px"><span>ประกอบกิจการพัฒนาอสังหาริมทรัพย์ทุกประเภท รวมถึงที่ดิน และ</span></div>
<div class="c g l" style="left:1177.89px;top:415.33px;width:325.44px;height:26.0px"><span>96  ชั้นที่ 3 ซอย รัชดาภิเษก 19 ถนนรัชดาภิเษก</span></div>
<div class="c k l" style="left:1503.33px;top:415.33px;width:101.22px;height:26.0px"><span>แขวงวัดท่าพระ</span></div>
<div class="c g l" style="left:1604.56px;top:415.33px;width:100.78px;height:26.0px"><span>เขตบางกอกใหญ่</span></div>
<div class="c k l" style="left:1705.33px;top:415.33px;width:100.78px;height:26.0px"><span>กรุงเทพมหานคร</span></div>
<div class="c g c" style="left:1806.11px;top:415.33px;width:91.0px;height:26.0px"><span>10600</span></div>
<div class="rh" style="left:0;top:441.33px;width:28.0px;height:26.0px"><span>17</span></div>
<div class="c g c" style="left:28.0px;top:441.33px;width:125.61px;height:26.0px"><span>0105568236584</span></div>
<div class="c k l" style="left:153.61px;top:441.33px;width:364.72px;height:26.0px"><span>บจ.สิริ-เอ็มเอฟ ไฟว์ จำกัด</span></div>
<div class="c g c" style="left:518.33px;top:441.33px;width:100.67px;height:26.0px"><span>15/12/2568</span></div>
<div class="c k r" style="left:619.0px;top:441.33px;width:125.44px;height:26.0px"><span>50,000,000</span></div>
<div class="c g c" style="left:744.44px;top:441.33px;width:100.89px;height:26.0px"><span>68102</span></div>
<div class="c k l" style="left:845.33px;top:441.33px;width:332.56px;height:26.0px"><span>พัฒนาอสังหาริมทรัพย์</span></div>
<div class="c g l" style="left:1177.89px;top:441.33px;width:325.44px;height:26.0px"><span>59  ซอยริมคลองพระโขนง</span></div>
<div class="c k l" style="left:1503.33px;top:441.33px;width:101.22px;height:26.0px"><span>แขวงพระโขนงเหนือ</span></div>
<div class="c g l" style="left:1604.56px;top:441.33px;width:100.78px;height:26.0px"><span>เขตวัฒนา</span></div>
<div class="c k l" style="left:1705.33px;top:441.33px;width:100.78px;height:26.0px"><span>กรุงเทพมหานคร</span></div>
<div class="c g c" style="left:1806.11px;top:441.33px;width:91.0px;height:26.0px"><span>10110</span></div>
<div class="rh" style="left:0;top:467.33px;width:28.0px;height:26.0px"><span>18</span></div>
<div class="c g c" style="left:28.0px;top:467.33px;width:125.61px;height:26.0px"><span>0105568241707</span></div>
<div class="c k l" style="left:153.61px;top:467.33px;width:364.72px;height:26.0px"><span>บจ.อินโนเทค ไทย รับเบอร์ โกลบอล โฮลดิ้งส์ จำกัด</span></div>
<div class="c g c" style="left:518.33px;top:467.33px;width:100.67px;height:26.0px"><span>24/12/2568</span></div>
<div class="c k r" style="left:619.0px;top:467.33px;width:125.44px;height:26.0px"><span>30,000,000</span></div>
<div class="c g c" style="left:744.44px;top:467.33px;width:100.89px;height:26.0px"><span>46693</span></div>
<div class="c k l" style="left:845.33px;top:467.33px;width:332.56px;height:26.0px"><span>ประกอบธุรกิจซื้อ ขาย นำเข้า ส่งออก ยางพารา ยางธรรมชาติ ยาง</span></div>
<div class="c g l" style="left:1177.89px;top:467.33px;width:325.44px;height:26.0px"><span>55  ถนนประเสริฐมนูกิจ</span></div>
<div class="c k l" style="left:1503.33px;top:467.33px;width:101.22px;height:26.0px"><span>แขวงรามอินทรา</span></div>
<div class="c g l" style="left:1604.56px;top:467.33px;width:100.78px;height:26.0px"><span>เขตคันนายาว</span></div>
<div class="c k l" style="left:1705.33px;top:467.33px;width:100.78px;height:26.0px"><span>กรุงเทพมหานคร</span></div>
<div class="c g c" style="left:1806.11px;top:467.33px;width:91.0px;height:26.0px"><span>10230</span></div>
<div class="rh" style="left:0;top:493.33px;width:28.0px;height:26.0px"><span>19</span></div>
<div class="c g c" style="left:28.0px;top:493.33px;width:125.61px;height:26.0px"><span>0105568231434</span></div>
<div class="c k l" style="left:153.61px;top:493.33px;width:364.72px;height:26.0px"><span>บจ.มงคลรวมทรัพย์ จำกัด</span></div>
<div class="c g c" style="left:518.33px;top:493.33px;width:100.67px;height:26.0px"><span>12/2/2568</span></div>
<div class="c k r" style="left:619.0px;top:493.33px;width:125.44px;height:26.0px"><span>25,000,000</span></div>
<div class="c g c" style="left:744.44px;top:493.33px;width:100.89px;height:26.0px"><span>68103</span></div>
<div class="c k l" style="left:845.33px;top:493.33px;width:332.56px;height:26.0px"><span>ประกอบกิจการให้เช่าอสังหาริมทรัพย์ รวมทั้ง อพาร์ทเม้นท์ หอพัก</span></div>
<div class="c g l" style="left:1177.89px;top:493.33px;width:325.44px;height:26.0px"><span>869/477  ซอย สุขุมวิท 101</span></div>
<div class="c k l" style="left:1503.33px;top:493.33px;width:101.22px;height:26.0px"><span>แขวงบางจาก</span></div>
<div class="c g l" style="left:1604.56px;top:493.33px;width:100.78px;height:26.0px"><span>เขตพระโขนง</span></div>
<div class="c k l" style="left:1705.33px;top:493.33px;width:100.78px;height:26.0px"><span>กรุงเทพมหานคร</span></div>
<div class="c g c" style="left:1806.11px;top:493.33px;width:91.0px;height:26.0px"><span>10260</span></div>
<div class="rh" style="left:0;top:519.33px;width:28.0px;height:26.0px"><span>20</span></div>
<div class="c g c" style="left:28.0px;top:519.33px;width:125.61px;height:26.0px"><span>0105568231442</span></div>
<div class="c k l" style="left:153.61px;top:519.33px;width:364.72px;height:26.0px"><span>บจ.มงคลมากทรัพย์ จำกัด</span></div>
<div class="c g c" style="left:518.33px;top:519.33px;width:100.67px;height:26.0px"><span>12/2/2568</span></div>
<div class="c k r" style="left:619.0px;top:519.33px;width:125.44px;height:26.0px"><span>25,000,000</span></div>
<div class="c g c" style="left:744.44px;top:519.33px;width:100.89px;height:26.0px"><span>68103</span></div>
<div class="c k l" style="left:845.33px;top:519.33px;width:332.56px;height:26.0px"><span>ประกอบกิจการให้เช่าอสังหาริมทรัพย์ รวมทั้ง อพาร์ทเม้นท์ หอพัก</span></div>
<div class="c g l" style="left:1177.89px;top:519.33px;width:325.44px;height:26.0px"><span>869/477  ซอย สุขุมวิท 101</span></div>
<div class="c k l" style="left:1503.33px;top:519.33px;width:101.22px;height:26.0px"><span>แขวงบางจาก</span></div>
<div class="c g l" style="left:1604.56px;top:519.33px;width:100.78px;height:26.0px"><span>เขตพระโขนง</span></div>
<div class="c k l" style="left:1705.33px;top:519.33px;width:100.78px;height:26.0px"><span>กรุงเทพมหานคร</span></div>
<div class="c g c" style="left:1806.11px;top:519.33px;width:91.0px;height:26.0px"><span>10260</span></div>
<div class="rh" style="left:0;top:545.33px;width:28.0px;height:26.0px"><span>21</span></div>
<div class="c g c" style="left:28.0px;top:545.33px;width:125.61px;height:26.0px"><span>0105568239362</span></div>
<div class="c k l" style="left:153.61px;top:545.33px;width:364.72px;height:26.0px"><span>บจ.เอ็มดีจี จำกัด</span></div>
<div class="c g c" style="left:518.33px;top:545.33px;width:100.67px;height:26.0px"><span>18/12/2568</span></div>
<div class="c k r" style="left:619.0px;top:545.33px;width:125.44px;height:26.0px"><span>25,000,000</span></div>
<div class="c g c" style="left:744.44px;top:545.33px;width:100.89px;height:26.0px"><span>20112</span></div>
<div class="c k l" style="left:845.33px;top:545.33px;width:332.56px;height:26.0px"><span>ประกอบกิจการโรงงานผลิตภัณฑ์ผงสีย้อมชนิดต่างๆ ได้แก่ สีย้อม</span></div>
<div class="c g l" style="left:1177.89px;top:545.33px;width:325.44px;height:26.0px"><span>30  ซอย พระรามเก้า55 (วิเศษสุข4)</span></div>
<div class="c k l" style="left:1503.33px;top:545.33px;width:101.22px;height:26.0px"><span>แขวงสวนหลวง</span></div>
<div class="c g l" style="left:1604.56px;top:545.33px;width:100.78px;height:26.0px"><span>เขตสวนหลวง</span></div>
<div class="c k l" style="left:1705.33px;top:545.33px;width:100.78px;height:26.0px"><span>กรุงเทพมหานคร</span></div>
<div class="c g c" style="left:1806.11px;top:545.33px;width:91.0px;height:26.0px"><span>10250</span></div>
<div class="rh" style="left:0;top:571.33px;width:28.0px;height:26.0px"><span>22</span></div>
<div class="c g c" style="left:28.0px;top:571.33px;width:125.61px;height:26.0px"><span>0105568231825</span></div>
<div class="c k l" style="left:153.61px;top:571.33px;width:364.72px;height:26.0px"><span>บจ.หัวซื่อ ดีเวลลอปเม้นต์ (ประเทศไทย) จำกัด</span></div>
<div class="c g c" style="left:518.33px;top:571.33px;width:100.67px;height:26.0px"><span>12/3/2568</span></div>
<div class="c k r" style="left:619.0px;top:571.33px;width:125.44px;height:26.0px"><span>20,000,000</span></div>
<div class="c g c" style="left:744.44px;top:571.33px;width:100.89px;height:26.0px"><span>41002</span></div>
<div class="c k l" style="left:845.33px;top:571.33px;width:332.56px;height:26.0px"><span>ประกอบธุรกิจให้บริการงานก่อสร้าง งานก่อสร้างอย่างมืออาชีพ ให้</span></div>
<div class="c g l" style="left:1177.89px;top:571.33px;width:325.44px;height:26.0px"><span>202  อาคารเลอ คองคอร์ด  ห้องเลขที่ 1403 ชั้นที่ 14 ถนนรัชดาภิเษก</span></div>
<div class="c k l" style="left:1503.33px;top:571.33px;width:101.22px;height:26.0px"><span>แขวงห้วยขวาง</span></div>
<div class="c g l" style="left:1604.56px;top:571.33px;width:100.78px;height:26.0px"><span>เขตห้วยขวาง</span></div>
<div class="c k l" style="left:1705.33px;top:571.33px;width:100.78px;height:26.0px"><span>กรุงเทพมหานคร</span></div>
<div class="c g c" style="left:1806.11px;top:571.33px;width:91.0px;height:26.0px"><span>10310</span></div>
<div class="rh" style="left:0;top:597.33px;width:28.0px;height:26.0px"><span>23</span></div>
<div class="c g c" style="left:28.0px;top:597.33px;width:125.61px;height:26.0px"><span>0105568234212</span></div>
<div class="c k l" style="left:153.61px;top:597.33px;width:364.72px;height:26.0px"><span>บจ.เอ็นที โกลด์แอนด์จิวเวลรี่ จำกัด</span></div>
<div class="c g c" style="left:518.33px;top:597.33px;width:100.67px;height:26.0px"><span>12/9/2568</span></div>
<div class="c k r" style="left:619.0px;top:597.33px;width:125.44px;height:26.0px"><span>20,000,000</span></div>
<div class="c g c" style="left:744.44px;top:597.33px;width:100.89px;height:26.0px"><span>32111</span></div>
<div class="c k l" style="left:845.33px;top:597.33px;width:332.56px;height:26.0px"><span>ประกอบกิจการผลิต ออกแบบชิ้นงาน ทอง นาค เงิน เพชร พลอย</span></div>
<div class="c g l" style="left:1177.89px;top:597.33px;width:325.44px;height:26.0px"><span>38  อาคารเอ 24 ชั้นที่ 3-4 ซอย สุขาภิบาล 2 ซอย 31</span></div>
<div class="c k l" style="left:1503.33px;top:597.33px;width:101.22px;height:26.0px"><span>แขวงดอกไม้</span></div>
<div class="c g l" style="left:1604.56px;top:597.33px;width:100.78px;height:26.0px"><span>เขตประเวศ</span></div>
<div class="c k l" style="left:1705.33px;top:597.33px;width:100.78px;height:26.0px"><span>กรุงเทพมหานคร</span></div>
<div class="c g c" style="left:1806.11px;top:597.33px;width:91.0px;height:26.0px"><span>10250</span></div>
<div class="rh" style="left:0;top:623.33px;width:28.0px;height:26.0px"><span>24</span></div>
<div class="c g c" style="left:28.0px;top:623.33px;width:125.61px;height:26.0px"><span>0105568234778</span></div>
<div class="c k l" style="left:153.61px;top:623.33px;width:364.72px;height:26.0px"><span>บจ.สุข คอร์ปอเรชั่น จำกัด</span></div>
<div class="c g c" style="left:518.33px;top:623.33px;width:100.67px;height:26.0px"><span>12/10/2568</span></div>
<div class="c k r" style="left:619.0px;top:623.33px;width:125.44px;height:26.0px"><span>20,000,000</span></div>
<div class="c g c" style="left:744.44px;top:623.33px;width:100.89px;height:26.0px"><span>47721</span></div>
<div class="c k l" style="left:845.33px;top:623.33px;width:332.56px;height:26.0px"><span>ประกอบกิจการนำเข้า ส่งออก ซื้อ จำหน่าย จำหน่ายส่ง จำหน่ายปลีก</span></div>
<div class="c g l" style="left:1177.89px;top:623.33px;width:325.44px;height:26.0px"><span>611/210-213  ซอย วัดจันทร์ใน</span></div>
<div class="c k l" style="left:1503.33px;top:623.33px;width:101.22px;height:26.0px"><span>แขวงบางโคล่</span></div>
<div class="c g l" style="left:1604.56px;top:623.33px;width:100.78px;height:26.0px"><span>เขตบางคอแหลม</span></div>
<div class="c k l" style="left:1705.33px;top:623.33px;width:100.78px;height:26.0px"><span>กรุงเทพมหานคร</span></div>
<div class="c g c" style="left:1806.11px;top:623.33px;width:91.0px;height:26.0px"><span>10120</span></div>
<div class="rh" style="left:0;top:649.33px;width:28.0px;height:26.0px"><span>25</span></div>
<div class="c g c" style="left:28.0px;top:649.33px;width:125.61px;height:26.0px"><span>0105568234956</span></div>
<div class="c k l" style="left:153.61px;top:649.33px;width:364.72px;height:26.0px"><span>บจ.ออโต้ไลน์ อินเทลลิเจนท์ โลจิสติกส์ (ประเทศไทย) จำกัด</span></div>
<div class="c g c" style="left:518.33px;top:649.33px;width:100.67px;height:26.0px"><span>12/11/2568</span></div>
<div class="c k r" style="left:619.0px;top:649.33px;width:125.44px;height:26.0px"><span>20,000,000</span></div>
<div class="c g c" style="left:744.44px;top:649.33px;width:100.89px;height:26.0px"><span>28160</span></div>
<div class="c k l" style="left:845.33px;top:649.33px;width:332.56px;height:26.0px"><span>ประกอบกิจการพัฒนา ออกแบบ ผลิต ประกอบ ทดสอบ ติดตั้ง ซ่อม</span></div>
<div class="c g l" style="left:1177.89px;top:649.33px;width:325.44px;height:26.0px"><span>33/4  อาคารเดอะไนน์ทาวน์เวอร์ อาคารเอ ชั้นที่ 34 ถนนพระราม 9</span></div>
<div class="c k l" style="left:1503.33px;top:649.33px;width:101.22px;height:26.0px"><span>แขวงห้วยขวาง</span></div>
<div class="c g l" style="left:1604.56px;top:649.33px;width:100.78px;height:26.0px"><span>เขตห้วยขวาง</span></div>
<div class="c k l" style="left:1705.33px;top:649.33px;width:100.78px;height:26.0px"><span>กรุงเทพมหานคร</span></div>
<div class="c g c" style="left:1806.11px;top:649.33px;width:91.0px;height:26.0px"><span>10310</span></div>
<div class="rh" style="left:0;top:675.33px;width:28.0px;height:26.0px"><span>26</span></div>
<div class="c g c" style="left:28.0px;top:675.33px;width:125.61px;height:26.0px"><span>0105568235286</span></div>
<div class="c k l" style="left:153.61px;top:675.33px;width:364.72px;height:26.0px"><span>บจ.วิวัฒน์ สมาร์ท ฟาร์ม จำกัด</span></div>
<div class="c g c" style="left:518.33px;top:675.33px;width:100.67px;height:26.0px"><span>12/11/2568</span></div>
<div class="c k r" style="left:619.0px;top:675.33px;width:125.44px;height:26.0px"><span>20,000,000</span></div>
<div class="c g c" style="left:744.44px;top:675.33px;width:100.89px;height:26.0px"><span>1411</span></div>
<div class="c k l" style="left:845.33px;top:675.33px;width:332.56px;height:26.0px"><span>ทำการเกษตร เลี้ยงวัว นำเข้า-ส่งออกวัวมีชีวิต</span></div>
<div class="c g l" style="left:1177.89px;top:675.33px;width:325.44px;height:26.0px"><span>98/16  ถนนราษฎร์พัฒนา</span></div>
<div class="c k l" style="left:1503.33px;top:675.33px;width:101.22px;height:26.0px"><span>แขวงราษฎร์พัฒนา</span></div>
<div class="c g l" style="left:1604.56px;top:675.33px;width:100.78px;height:26.0px"><span>เขตสะพานสูง</span></div>
<div class="c k l" style="left:1705.33px;top:675.33px;width:100.78px;height:26.0px"><span>กรุงเทพมหานคร</span></div>
<div class="c g c" style="left:1806.11px;top:675.33px;width:91.0px;height:26.0px"><span>10240</span></div>
<div class="rh" style="left:0;top:701.33px;width:28.0px;height:26.0px"><span>27</span></div>
<div class="c g c" style="left:28.0px;top:701.33px;width:125.61px;height:26.0px"><span>0105568236347</span></div>
<div class="c k l" style="left:153.61px;top:701.33px;width:364.72px;height:26.0px"><span>บจ.แอลพี แอนด์ อี จำกัด</span></div>
<div class="c g c" style="left:518.33px;top:701.33px;width:100.67px;height:26.0px"><span>12/12/2568</span></div>
<div class="c k r" style="left:619.0px;top:701.33px;width:125.44px;height:26.0px"><span>20,000,000</span></div>
<div class="c g c" style="left:744.44px;top:701.33px;width:100.89px;height:26.0px"><span>70209</span></div>
<div class="c k l" style="left:845.33px;top:701.33px;width:332.56px;height:26.0px"><span>ประกอบกิจการให้คำปรึกษาด้านการตลาด ด้านการวางแผนธุรกิจ</span></div>
<div class="c g l" style="left:1177.89px;top:701.33px;width:325.44px;height:26.0px"><span>2  อาคารสีลมเอจ  ห้องเลขที่ S10055 ชั้นที่ 10 ถนนสีลม</span></div>
<div class="c k l" style="left:1503.33px;top:701.33px;width:101.22px;height:26.0px"><span>แขวงสุริยวงศ์</span></div>
<div class="c g l" style="left:1604.56px;top:701.33px;width:100.78px;height:26.0px"><span>เขตบางรัก</span></div>
<div class="c k l" style="left:1705.33px;top:701.33px;width:100.78px;height:26.0px"><span>กรุงเทพมหานคร</span></div>
<div class="c g c" style="left:1806.11px;top:701.33px;width:91.0px;height:26.0px"><span>10500</span></div>
<div class="rh" style="left:0;top:727.33px;width:28.0px;height:26.0px"><span>28</span></div>
<div class="c g c" style="left:28.0px;top:727.33px;width:125.61px;height:26.0px"><span>0105568237106</span></div>
<div class="c k l" style="left:153.61px;top:727.33px;width:364.72px;height:26.0px"><span>บจ.จึ้งดึ่ง จำกัด</span></div>
<div class="c g c" style="left:518.33px;top:727.33px;width:100.67px;height:26.0px"><span>15/12/2568</span></div>
<div class="c k r" style="left:619.0px;top:727.33px;width:125.44px;height:26.0px"><span>20,000,000</span></div>
<div class="c g c" style="left:744.44px;top:727.33px;width:100.89px;height:26.0px"><span>68104</span></div>
<div class="c k l" style="left:845.33px;top:727.33px;width:332.56px;height:26.0px"><span>ประกอบกิจการ รับซื้อ-ขาย ให้เช่าอสังหาริมทรัพย์ เช่น ที่ดินเปล่า</span></div>
<div class="c g l" style="left:1177.89px;top:727.33px;width:325.44px;height:26.0px"><span>2  ซอย เอกชัย 95/2</span></div>
<div class="c k l" style="left:1503.33px;top:727.33px;width:101.22px;height:26.0px"><span>แขวงบางบอนใต้</span></div>
<div class="c g l" style="left:1604.56px;top:727.33px;width:100.78px;height:26.0px"><span>เขตบางบอน</span></div>
<div class="c k l" style="left:1705.33px;top:727.33px;width:100.78px;height:26.0px"><span>กรุงเทพมหานคร</span></div>
<div class="c g c" style="left:1806.11px;top:727.33px;width:91.0px;height:26.0px"><span>10150</span></div>
<div class="rh" style="left:0;top:753.33px;width:28.0px;height:26.0px"><span>29</span></div>
<div class="c g c" style="left:28.0px;top:753.33px;width:125.61px;height:26.0px"><span>0105568228579</span></div>
<div class="c k l" style="left:153.61px;top:753.33px;width:364.72px;height:26.0px"><span>บจ.เจ เอ็ม เอ็น โฮลดิ้ง จำกัด</span></div>
<div class="c g c" style="left:518.33px;top:753.33px;width:100.67px;height:26.0px"><span>17/12/2568</span></div>
<div class="c k r" style="left:619.0px;top:753.33px;width:125.44px;height:26.0px"><span>10,000,060</span></div>
<div class="c g c" style="left:744.44px;top:753.33px;width:100.89px;height:26.0px"><span>64202</span></div>
<div class="c k l" style="left:845.33px;top:753.33px;width:332.56px;height:26.0px"><span>เข้าเป็นหุ้นส่วนจำกัดความรับผิดในห้างหุ้นส่วนจำกัด เป็นผู้ถือหุ้นใน</span></div>
<div class="c g l" style="left:1177.89px;top:753.33px;width:325.44px;height:26.0px"><span>57  ซอยรามคำแหง 65 แยก 4</span></div>
<div class="c k l" style="left:1503.33px;top:753.33px;width:101.22px;height:26.0px"><span>แขวงหัวหมาก</span></div>
<div class="c g l" style="left:1604.56px;top:753.33px;width:100.78px;height:26.0px"><span>เขตบางกะปิ</span></div>
<div class="c k l" style="left:1705.33px;top:753.33px;width:100.78px;height:26.0px"><span>กรุงเทพมหานคร</span></div>
<div class="c g c" style="left:1806.11px;top:753.33px;width:91.0px;height:26.0px"><span>10220</span></div>
<svg class="gl" style="left:0;top:0;width:1920px;height:770.89px" viewBox="0 0 1920 770.89"><path d="M153.61 52.33V770.89 M518.33 18.22V770.89 M619.0 18.22V770.89 M744.44 18.22V770.89 M845.33 18.22V770.89 M1177.89 18.22V770.89 M1503.33 18.22V770.89 M1604.56 18.22V770.89 M1705.33 18.22V770.89 M1806.11 18.22V770.89 M1897.11 18.22V770.89 M154.61 51.33H1897.7099999999998 M28.0 77.33H1897.7099999999998 M28.0 103.33H1897.7099999999998 M28.0 129.33H1897.7099999999998 M28.0 155.33H1897.7099999999998 M28.0 181.33H1897.7099999999998 M28.0 207.33H1897.7099999999998 M28.0 233.33H1897.7099999999998 M28.0 259.33H1897.7099999999998 M28.0 285.33H1897.7099999999998 M28.0 311.33H1897.7099999999998 M28.0 337.33H1897.7099999999998 M28.0 363.33H1897.7099999999998 M28.0 389.33H1897.7099999999998 M28.0 415.33H1897.7099999999998 M28.0 441.33H1897.7099999999998 M28.0 467.33H1897.7099999999998 M28.0 493.33H1897.7099999999998 M28.0 519.33H1897.7099999999998 M28.0 545.33H1897.7099999999998 M28.0 571.33H1897.7099999999998 M28.0 597.33H1897.7099999999998 M28.0 623.33H1897.7099999999998 M28.0 649.33H1897.7099999999998 M28.0 675.33H1897.7099999999998 M28.0 701.33H1897.7099999999998 M28.0 727.33H1897.7099999999998 M28.0 753.33H1897.7099999999998 M28.0 779.33H1897.7099999999998" stroke="#000" stroke-width="1.2" fill="none"/></svg>
<div class="selbox" style="left:27.0px;top:17.22px;width:127.11px;height:34.61px"></div>
<div class="selh" style="left:150.11px;top:48.33px"></div>
<div class="vsb" style="left:1898.89px;top:0;width:21.11px;height:770.89px"><b class="up"></b><i class="thumb"></i><b class="dn"></b></div>
</div>
<div id="sheets" style="left:0;top:986.89px;width:1920px;height:30.33px">
<svg style="left:23.17px;top:6.28px;width:17.0px;height:17.0px" viewBox="-10 -10 20 20" fill="none" ><path d="M2.5 -5.5 L-3 0 L2.5 5.5" stroke="#555" stroke-width="1.5" stroke-linecap="round" stroke-linejoin="round"/></svg>
<svg style="left:55.39px;top:6.28px;width:17.0px;height:17.0px" viewBox="-10 -10 20 20" fill="none" ><path d="M-2.5 -5.5 L3 0 L-2.5 5.5" stroke="#a8a8a8" stroke-width="1.5" stroke-linecap="round" stroke-linejoin="round"/></svg>
<div style="left:90.56px;top:14.78px;width:2.4px;height:2.4px;background:#333;border-radius:2px"></div>
<div style="left:94.33px;top:14.78px;width:2.4px;height:2.4px;background:#333;border-radius:2px"></div>
<div style="left:98.11px;top:14.78px;width:2.4px;height:2.4px;background:#333;border-radius:2px"></div>
<span class="t" style="left:125.89px;top:2.7799999999999994px">ก.พ.2568</span>
<span class="t" style="left:208.11px;top:2.7799999999999994px">มี.ค.2568</span>
<span class="t" style="left:291.11px;top:2.7799999999999994px">เม.ย.2568</span>
<span class="t" style="left:376.67px;top:2.7799999999999994px">พ.ค.2568</span>
<span class="t" style="left:460.33px;top:2.7799999999999994px">มิ.ย.2568</span>
<span class="t" style="left:542.78px;top:2.7799999999999994px">ก.ค.2568</span>
<span class="t" style="left:625.0px;top:2.7799999999999994px">ส.ค.2568</span>
<span class="t" style="left:707.22px;top:2.7799999999999994px">ก.ย.2568</span>
<span class="t" style="left:788.89px;top:2.7799999999999994px">ต.ค.2568</span>
<span class="t" style="left:871.11px;top:2.7799999999999994px">พ.ย.2568</span>
<div class="act" style="left:945.56px;top:0;width:71.11px;height:25.89px"></div>
<span class="t" style="left:953.33px;top:-0.22000000000000064px;font-weight:bold;font-size:14px;color:#222">ธ.ค.2568</span>
<div style="left:953.33px;top:22.22px;width:55.78px;height:2.6px;background:#1a8a4a;border-radius:1px"></div>
<div class="sp" style="left:194.78px;top:6.67px;height:17.78px"></div>
<div class="sp" style="left:277.22px;top:6.67px;height:17.78px"></div>
<div class="sp" style="left:363.33px;top:6.67px;height:17.78px"></div>
<div class="sp" style="left:447.22px;top:6.67px;height:17.78px"></div>
<div class="sp" style="left:530.0px;top:6.67px;height:17.78px"></div>
<div class="sp" style="left:612.22px;top:6.67px;height:17.78px"></div>
<div class="sp" style="left:694.44px;top:6.67px;height:17.78px"></div>
<div class="sp" style="left:776.11px;top:6.67px;height:17.78px"></div>
<div class="sp" style="left:857.78px;top:6.67px;height:17.78px"></div>
<div class="sp" style="left:940.0px;top:6.67px;height:17.78px"></div>
<div class="sp" style="left:1021.67px;top:6.67px;height:17.78px"></div>
<svg style="left:1059.22px;top:4.78px;width:20px;height:20px" viewBox="-10 -10 20 20" fill="none" ><path d="M-5.555555555555555 0 H5.555555555555555 M0 -5.555555555555555 V5.555555555555555" stroke="#444" stroke-width="1.3" stroke-linecap="round"/></svg>
<div style="left:1153.67px;top:10.78px;width:2.2px;height:2.2px;background:#333;border-radius:1px"></div>
<div style="left:1153.67px;top:14.78px;width:2.2px;height:2.2px;background:#333;border-radius:1px"></div>
<div style="left:1153.67px;top:18.78px;width:2.2px;height:2.2px;background:#333;border-radius:1px"></div>
<div style="left:1164.44px;top:0;width:755.56px;height:10.33px;background:linear-gradient(#f2f2f2,#fbfbfb)"></div>
<div style="left:1175.56px;top:10.89px;width:0;height:0;border-top:4.11px solid transparent;border-bottom:4.11px solid transparent;border-right:6.11px solid #777"></div>
<div style="left:1188.33px;top:10.78px;width:668.33px;height:8.22px;border-radius:4.11px;background:#707070"></div>
<div style="left:1888.89px;top:10.89px;width:0;height:0;border-top:4.11px solid transparent;border-bottom:4.11px solid transparent;border-left:6.11px solid #777"></div>
</div>
<div id="status" style="left:0;top:1017.22px;width:1920px;height:23.78px">
<span class="t" style="left:12.0px;top:2.0px;">พร้อม</span>
<svg style="left:52.87px;top:2.65px;width:18.7px;height:18.7px" viewBox="-11 -11 22 22" fill="none" ><circle cx="-1" cy="-6.5" r="2" stroke="#333" stroke-width="1.2"/><path d="M-8 -3 L-3.5 -2 V2 L-6 8 M6 -3 L1.5 -2 V2 L2.5 4 M-3.5 -2 H1.5" stroke="#333" stroke-width="1.3" stroke-linecap="round" stroke-linejoin="round"/><path d="M2.5 4.5 L8.5 10 M8.5 4.5 L2.5 10" stroke="#333" stroke-width="1.3" stroke-linecap="round"/></svg>
<span class="t" style="left:72.78px;top:2.0px;">การช่วยสำหรับการเข้าถึง: โปรดศึกษาคำแนะนำ</span>
<div style="left:1620.0px;top:1.11px;width:40.0px;height:21.67px;background:#e2e2e2"></div>
<svg style="left:1629.44px;top:2.0px;width:20px;height:20px" viewBox="-10 -10 20 20" fill="none" ><rect x="-6.5" y="-6.5" width="13" height="13" stroke="#333" stroke-width="1.3"/><path d="M-2.2 -6.5 V6.5 M2.2 -6.5 V6.5 M-6.5 -2.2 H6.5 M-6.5 2.2 H6.5" stroke="#333" stroke-width="1.2"/></svg>
<svg style="left:1669.78px;top:2.0px;width:20px;height:20px" viewBox="-10 -10 20 20" fill="none" ><rect x="-6.5" y="-6.5" width="13" height="13" rx="1.5" stroke="#444" stroke-width="1.3"/><rect x="-3.5" y="-3.5" width="7" height="7" stroke="#444" stroke-width="1.1"/><path d="M-2 -1.2 H2 M-2 1.2 H2" stroke="#444" stroke-width="1"/></svg>
<svg style="left:1710.0px;top:2.0px;width:20px;height:20px" viewBox="-10 -10 20 20" fill="none" ><rect x="-6.5" y="-6.5" width="13" height="13" stroke="#444" stroke-width="1.3"/><path d="M-6.5 1.5 H1 V-6.5 M1 1.5 H6.5" stroke="#444" stroke-width="1.2"/></svg>
<div style="left:1746.11px;top:12.0px;width:7.78px;height:1.2px;background:#444"></div>
<div style="left:1758.89px;top:12.0px;width:100.0px;height:1px;background:#8a8a8a"></div>
<div style="left:1807.44px;top:6.67px;width:4.22px;height:11.11px;background:#555"></div>
<svg style="left:1857.22px;top:2.22px;width:20px;height:20px" viewBox="-10 -10 20 20" fill="none" ><path d="M-4.0 0 H4.0 M0 -4.0 V4.0" stroke="#444" stroke-width="1.3" stroke-linecap="round"/></svg>
<span class="t" style="left:1885.11px;top:2.0px;color:#444;font-weight:400;font-size:11.3px">100%</span>
</div>
</div></div>
</body></html>
